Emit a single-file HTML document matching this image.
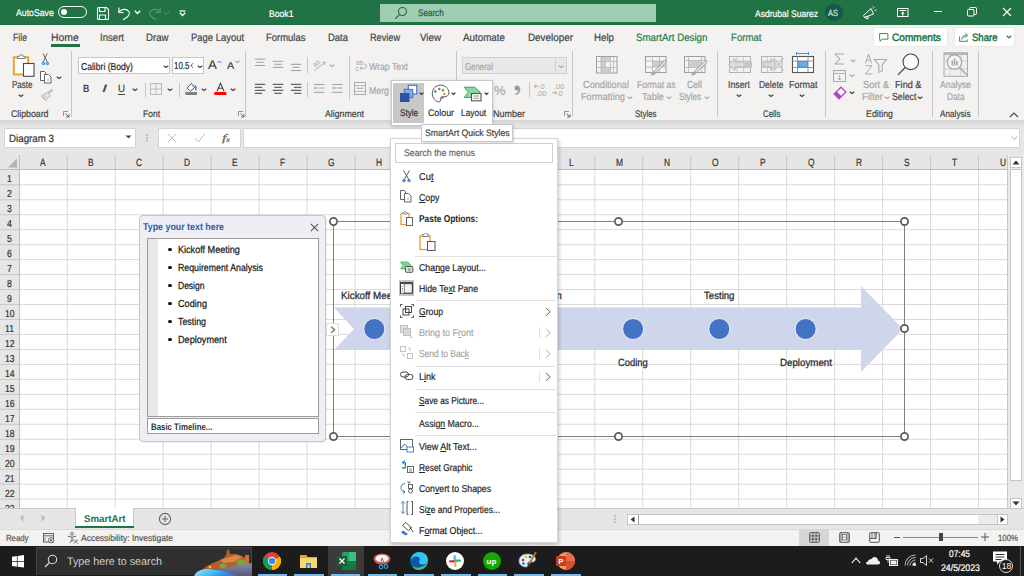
<!DOCTYPE html>
<html><head><meta charset="utf-8"><style>
*{margin:0;padding:0;box-sizing:border-box}
html,body{width:1024px;height:576px;overflow:hidden;background:#fff;font-family:"Liberation Sans",sans-serif;position:relative}
.a{position:absolute}
.t{position:absolute;white-space:nowrap;line-height:1;-webkit-text-stroke:0.2px currentColor;text-rendering:geometricPrecision}
u{text-decoration:underline;text-decoration-thickness:1px;text-underline-offset:1px}
</style></head><body>
<div class="a" style="left:0px;top:0px;width:1024px;height:25px;background:#217346;"></div>
<div class="t" style="left:15.50px;top:9.00px;font-size:9.6px;color:#fff;transform:scaleX(0.9080);transform-origin:0 0;">AutoSave</div>
<div class="a" style="left:58px;top:6px;width:29px;height:12px;background:none;border:1px solid #fff;border-radius:6px;"></div>
<div class="a" style="left:61px;top:9px;width:6px;height:6px;background:#fff;border-radius:50%;"></div>
<svg class="a" style="left:96px;top:6px;" width="14" height="15" viewBox="0 0 14 15"><path d="M1.5 2.5a1 1 0 0 1 1-1h8l2 2v9a1 1 0 0 1-1 1h-9a1 1 0 0 1-1-1z" fill="none" stroke="#fff" stroke-width="1.1"/><path d="M3.5 1.5v4h5.5v-4M3.5 13.5v-4.5h6v4.5" fill="none" stroke="#fff" stroke-width="1.1"/></svg>
<svg class="a" style="left:117px;top:6px;" width="15" height="15" viewBox="0 0 15 15"><path d="M2 1.5L1.8 6.3L6.5 6.6" fill="none" stroke="#fff" stroke-width="1.1"/><path d="M2 6.2C4 3 9.5 2.2 11.8 5.5C13.5 8 12 10.5 6 13.8" fill="none" stroke="#fff" stroke-width="1.1"/></svg>
<svg class="a" style="left:133.5px;top:10px;" width="7" height="5" viewBox="0 0 7 5"><path d="M0.8 0.8l2.7 2.7 2.7-2.7" fill="none" stroke="#fff" stroke-width="1.3"/></svg>
<svg class="a" style="left:147px;top:6px;" width="15" height="15" viewBox="0 0 15 15"><path d="M13 1.5L13.2 6.3L8.5 6.6" fill="none" stroke="#5a9a74" stroke-width="1.1"/><path d="M13 6.2C11 3 5.5 2.2 3.2 5.5C1.5 8 3 10.5 9 13.8" fill="none" stroke="#5a9a74" stroke-width="1.1"/></svg>
<svg class="a" style="left:163px;top:10.5px;" width="7" height="5" viewBox="0 0 7 5"><path d="M0.8 0.8l2.7 2.7 2.7-2.7" fill="none" stroke="#5a9a74" stroke-width="1"/></svg>
<svg class="a" style="left:179px;top:9.5px;" width="7" height="7" viewBox="0 0 7 7"><path d="M0.5 1h6" stroke="#fff" stroke-width="1.2"/><path d="M0.8 2.8l2.7 2.7 2.7-2.7" fill="none" stroke="#fff" stroke-width="1.3"/></svg>
<div class="t" style="left:269.00px;top:10.00px;font-size:9.6px;color:#fff;transform:scaleX(0.9000);transform-origin:0 0;">Book1</div>
<div class="a" style="left:380px;top:4px;width:276px;height:18px;background:#9fcdb3;"></div>
<svg class="a" style="left:394px;top:6px;" width="14" height="14" viewBox="0 0 14 14"><circle cx="8.5" cy="5.5" r="4" fill="none" stroke="#1f6b40" stroke-width="1.1"/><path d="M5.6 8.4L1.2 12.8" stroke="#1f6b40" stroke-width="1.2"/></svg>
<div class="t" style="left:417.70px;top:9.00px;font-size:9.6px;color:#1c5e3a;transform:scaleX(0.8449);transform-origin:0 0;">Search</div>
<div class="t" style="left:755.00px;top:10.00px;font-size:9.6px;color:#fff;transform:scaleX(0.8876);transform-origin:0 0;">Asdrubal Suarez</div>
<div class="a" style="left:825px;top:3.6px;width:17.5px;height:17.5px;background:#135a48;border-radius:50%;"></div>
<div class="t" style="left:828.30px;top:9.00px;font-size:9px;color:#cfe6dd;transform:scaleX(0.8329);transform-origin:0 0;">AS</div>
<svg class="a" style="left:862px;top:6px;" width="15" height="14" viewBox="0 0 15 14"><path d="M1.5 9.5L9 2.5l2.5 5.5-9 3.5z" fill="none" stroke="#fff" stroke-width="1"/><path d="M3.5 10.5l1 2.5 2-0.8-0.8-2" fill="none" stroke="#fff" stroke-width="1"/><path d="M11 2.5l1.5-1.5M12.5 4.5l2-0.5M10.5 0.5l0.3-0.5" stroke="#fff" stroke-width="0.9"/></svg>
<svg class="a" style="left:897px;top:7.5px;" width="12" height="10" viewBox="0 0 12 10"><rect x="0.5" y="0.5" width="10.5" height="8" fill="none" stroke="#fff" stroke-width="1"/><path d="M2.5 2.5h6.5" stroke="#fff" stroke-width="1"/><path d="M5.75 3.5l-2 2h1.3v2h1.4v-2h1.3z" fill="#fff"/></svg>
<div class="a" style="left:934px;top:11px;width:7.5px;height:1px;background:#fff;"></div>
<svg class="a" style="left:967px;top:7px;" width="10" height="10" viewBox="0 0 10 10"><rect x="0.5" y="2.5" width="6.5" height="6.5" rx="1" fill="none" stroke="#fff" stroke-width="1"/><path d="M2.5 2.5v-1a1 1 0 0 1 1-1h5a1 1 0 0 1 1 1v5a1 1 0 0 1-1 1h-1.5" fill="none" stroke="#fff" stroke-width="1"/></svg>
<svg class="a" style="left:1002px;top:7px;" width="10" height="10" viewBox="0 0 10 10"><path d="M1 1l8 8M9 1l-8 8" stroke="#fff" stroke-width="1.1"/></svg>
<div class="a" style="left:0px;top:25px;width:1024px;height:95px;background:#f3f2f1;"></div>
<div class="t" style="left:12.80px;top:33.00px;font-size:10.6px;color:#444444;transform:scaleX(0.8196);transform-origin:0 0;">File</div>
<div class="t" style="left:51.00px;top:33.00px;font-size:10.6px;color:#444444;transform:scaleX(0.9832);transform-origin:0 0;">Home</div>
<div class="t" style="left:99.50px;top:33.00px;font-size:10.6px;color:#444444;transform:scaleX(0.9053);transform-origin:0 0;">Insert</div>
<div class="t" style="left:145.50px;top:33.00px;font-size:10.6px;color:#444444;transform:scaleX(0.9096);transform-origin:0 0;">Draw</div>
<div class="t" style="left:190.50px;top:33.00px;font-size:10.6px;color:#444444;transform:scaleX(0.8937);transform-origin:0 0;">Page Layout</div>
<div class="t" style="left:266.00px;top:33.00px;font-size:10.6px;color:#444444;transform:scaleX(0.8941);transform-origin:0 0;">Formulas</div>
<div class="t" style="left:327.70px;top:33.00px;font-size:10.6px;color:#444444;transform:scaleX(0.8932);transform-origin:0 0;">Data</div>
<div class="t" style="left:369.70px;top:33.00px;font-size:10.6px;color:#444444;transform:scaleX(0.8632);transform-origin:0 0;">Review</div>
<div class="t" style="left:420.00px;top:33.00px;font-size:10.6px;color:#444444;transform:scaleX(0.9217);transform-origin:0 0;">View</div>
<div class="t" style="left:463.00px;top:33.00px;font-size:10.6px;color:#444444;transform:scaleX(0.9257);transform-origin:0 0;">Automate</div>
<div class="t" style="left:527.50px;top:33.00px;font-size:10.6px;color:#444444;transform:scaleX(0.9313);transform-origin:0 0;">Developer</div>
<div class="t" style="left:594.00px;top:33.00px;font-size:10.6px;color:#444444;transform:scaleX(0.9174);transform-origin:0 0;">Help</div>
<div class="t" style="left:636.00px;top:33.00px;font-size:10.6px;color:#2a7a4a;transform:scaleX(0.9195);transform-origin:0 0;">SmartArt Design</div>
<div class="t" style="left:731.00px;top:33.00px;font-size:10.6px;color:#2a7a4a;transform:scaleX(0.9085);transform-origin:0 0;">Format</div>
<div class="a" style="left:51px;top:44px;width:29px;height:2.5px;background:#217346;"></div>
<div class="a" style="left:874px;top:28px;width:73px;height:17.5px;background:#fff;border-radius:2px;box-shadow:0 0 0 0.5px #e4e2e0;"></div>
<svg class="a" style="left:879px;top:32.5px;" width="10" height="9" viewBox="0 0 10 9"><path d="M0.6 0.6h8.3v5.6H3.2L1 8.3V6.2H0.6z" fill="none" stroke="#2e7d4f" stroke-width="0.9"/></svg>
<div class="t" style="left:891.60px;top:33.00px;font-size:10.6px;color:#217346;transform:scaleX(0.9523);transform-origin:0 0;-webkit-text-stroke:0.45px #217346;">Comments</div>
<div class="a" style="left:955px;top:28px;width:59px;height:17.5px;background:#fff;border-radius:2px;box-shadow:0 0 0 0.5px #e4e2e0;"></div>
<svg class="a" style="left:959px;top:32px;" width="11" height="10" viewBox="0 0 11 10"><path d="M0.6 4.5v4.8h7.6V7.5" fill="none" stroke="#2e7d4f" stroke-width="0.9"/><path d="M2.8 7.5c0-3 2-4.3 4.8-4.3M6.3 1l2.4 2.2-2.4 2.2" fill="none" stroke="#2e7d4f" stroke-width="0.9"/><path d="M3.5 6l3.5-2" stroke="#2e7d4f" stroke-width="0.6"/></svg>
<div class="t" style="left:972.30px;top:33.00px;font-size:10.6px;color:#217346;transform:scaleX(0.9015);transform-origin:0 0;-webkit-text-stroke:0.45px #217346;">Share</div>
<svg class="a" style="left:1005.5px;top:35px;" width="6" height="4" viewBox="0 0 6 4"><path d="M0.7 0.7l2.3 2.2 2.3-2.2" fill="none" stroke="#2e7d4f" stroke-width="1.2"/></svg>
<div class="t" style="left:10.80px;top:110.00px;font-size:9.6px;color:#444444;transform:scaleX(0.9126);transform-origin:0 0;">Clipboard</div>
<svg class="a" style="left:63px;top:111px;" width="7" height="7" viewBox="0 0 7 7"><path d="M0.5 5V0.5H5" fill="none" stroke="#888" stroke-width="0.9"/><path d="M2.5 2.5l3.5 3.5M6 3.2v2.8H3.2" fill="none" stroke="#666" stroke-width="1"/></svg>
<div class="a" style="left:71px;top:51px;width:1px;height:66px;background:#c8c6c4;"></div>
<div class="t" style="left:143.00px;top:110.00px;font-size:9.6px;color:#444444;transform:scaleX(0.8850);transform-origin:0 0;">Font</div>
<svg class="a" style="left:238px;top:111px;" width="7" height="7" viewBox="0 0 7 7"><path d="M0.5 5V0.5H5" fill="none" stroke="#888" stroke-width="0.9"/><path d="M2.5 2.5l3.5 3.5M6 3.2v2.8H3.2" fill="none" stroke="#666" stroke-width="1"/></svg>
<div class="a" style="left:245px;top:51px;width:1px;height:66px;background:#c8c6c4;"></div>
<div class="t" style="left:325.00px;top:110.00px;font-size:9.6px;color:#444444;transform:scaleX(0.9135);transform-origin:0 0;">Alignment</div>
<div class="a" style="left:455.5px;top:51px;width:1px;height:69px;background:#c8c6c4;"></div>
<div class="t" style="left:493.00px;top:110.00px;font-size:9.6px;color:#444444;transform:scaleX(0.9372);transform-origin:0 0;">Number</div>
<svg class="a" style="left:564px;top:111px;" width="7" height="7" viewBox="0 0 7 7"><path d="M0.5 5V0.5H5" fill="none" stroke="#888" stroke-width="0.9"/><path d="M2.5 2.5l3.5 3.5M6 3.2v2.8H3.2" fill="none" stroke="#666" stroke-width="1"/></svg>
<div class="a" style="left:572px;top:51px;width:1px;height:66px;background:#c8c6c4;"></div>
<div class="t" style="left:634.50px;top:110.00px;font-size:9.6px;color:#444444;transform:scaleX(0.8224);transform-origin:0 0;">Styles</div>
<div class="a" style="left:717px;top:51px;width:1px;height:66px;background:#c8c6c4;"></div>
<div class="t" style="left:762.70px;top:110.00px;font-size:9.6px;color:#444444;transform:scaleX(0.8201);transform-origin:0 0;">Cells</div>
<div class="a" style="left:825px;top:51px;width:1px;height:66px;background:#c8c6c4;"></div>
<div class="t" style="left:865.50px;top:110.00px;font-size:9.6px;color:#444444;transform:scaleX(0.9198);transform-origin:0 0;">Editing</div>
<div class="a" style="left:932px;top:51px;width:1px;height:66px;background:#c8c6c4;"></div>
<div class="t" style="left:940.00px;top:110.00px;font-size:9.6px;color:#444444;transform:scaleX(0.8532);transform-origin:0 0;">Analysis</div>
<div class="a" style="left:978px;top:51px;width:1px;height:66px;background:#c8c6c4;"></div>
<svg class="a" style="left:1009px;top:112px;" width="10" height="6" viewBox="0 0 10 6"><path d="M1 5l4-4 4 4" fill="none" stroke="#444" stroke-width="1.1"/></svg>
<svg class="a" style="left:12px;top:53px;" width="24" height="25" viewBox="0 0 24 25"><rect x="1.8" y="4.3" width="14.4" height="17.2" fill="#fff" stroke="#ee9b2e" stroke-width="1.9"/><path d="M5.5 5.5v-2.2h2.2a1.6 1.6 0 0 1 3.2 0h2.2v2.2z" fill="#fff" stroke="#7a7a7a" stroke-width="1"/><rect x="11.5" y="10.5" width="10.5" height="12.8" fill="#fff" stroke="#4a4a4a" stroke-width="1.1"/></svg>
<div class="t" style="left:11.80px;top:81.00px;font-size:10.2px;color:#444444;transform:scaleX(0.7859);transform-origin:0 0;">Paste</div>
<svg class="a" style="left:18px;top:94px;" width="6" height="4" viewBox="0 0 6 4"><path d="M0.7 0.7l2.3 1.8 2.3 -1.8" fill="none" stroke="#444" stroke-width="1.2"/></svg>
<svg class="a" style="left:40px;top:53px;" width="10" height="13" viewBox="0 0 10 13"><path d="M3.2 0.5l4.3 9M7.2 0.5l-4.3 9" stroke="#555" stroke-width="0.9" fill="none"/><circle cx="3.4" cy="10.5" r="1.7" fill="#4a98e0"/><circle cx="7.4" cy="10.5" r="1.7" fill="#4a98e0"/><circle cx="3.4" cy="10.5" r="0.6" fill="#a8d0f4"/><circle cx="7.4" cy="10.5" r="0.6" fill="#a8d0f4"/></svg>
<svg class="a" style="left:39px;top:70px;" width="14" height="14" viewBox="0 0 14 14"><path d="M1.5 1.5h4l1 1v8h-5z" fill="#fff" stroke="#555" stroke-width="0.9"/><path d="M5.5 4.5h4l2.5 2.5v6h-6.5z" fill="#fff" stroke="#555" stroke-width="0.9"/><path d="M8 10h2" stroke="#888" stroke-width="0.8"/></svg>
<svg class="a" style="left:56px;top:76px;" width="6" height="4" viewBox="0 0 6 4"><path d="M0.7 0.7l2.3 1.8 2.3 -1.8" fill="none" stroke="#444" stroke-width="1.2"/></svg>
<svg class="a" style="left:39px;top:88px;" width="15" height="13" viewBox="0 0 15 13"><path d="M13.5 1.5L9 5.5" stroke="#b8b8b8" stroke-width="2.2"/><path d="M8.5 4.5l3 3-5 5-4.5-4.5z" fill="#e4e4e4" stroke="#b0b0b0" stroke-width="0.9"/><path d="M4 9l2 2M5.5 7.5l2 2" stroke="#b0b0b0" stroke-width="0.8"/></svg>
<div class="a" style="left:78px;top:57px;width:92px;height:17px;background:#fff;border:1px solid #c8c6c4;"></div>
<div class="t" style="left:80.50px;top:63.00px;font-size:10.2px;color:#262626;transform:scaleX(0.8416);transform-origin:0 0;">Calibri (Body)</div>
<svg class="a" style="left:162.5px;top:64.5px;" width="6" height="4" viewBox="0 0 6 4"><path d="M0.7 0.7l2.3 1.8 2.3 -1.8" fill="none" stroke="#444" stroke-width="1.2"/></svg>
<div class="a" style="left:172px;top:57px;width:32px;height:17px;background:#fff;border:1px solid #c8c6c4;"></div>
<div class="t" style="left:174.30px;top:62.00px;font-size:10.2px;color:#262626;transform:scaleX(0.7757);transform-origin:0 0;">10.5</div>
<svg class="a" style="left:190.3px;top:62px;" width="4" height="7" viewBox="0 0 4 7"><path d="M3.3 1L0.8 3.5 3.3 6M1 3.5h1.2" fill="none" stroke="#666" stroke-width="0.9"/></svg>
<svg class="a" style="left:196.5px;top:64.5px;" width="6" height="4" viewBox="0 0 6 4"><path d="M0.7 0.7l2.3 1.8 2.3 -1.8" fill="none" stroke="#444" stroke-width="1.2"/></svg>
<div class="t" style="left:208.00px;top:59.00px;font-size:12.5px;color:#444;transform:scaleX(1.0554);transform-origin:0 0;">A</div>
<svg class="a" style="left:216.5px;top:59.5px;" width="5" height="4" viewBox="0 0 5 4"><path d="M0.5 3l2-2 2 2" fill="none" stroke="#2b7cd3" stroke-width="1"/></svg>
<div class="t" style="left:227.20px;top:62.00px;font-size:10px;color:#444;transform:scaleX(1.0794);transform-origin:0 0;">A</div>
<svg class="a" style="left:234.5px;top:60px;" width="5" height="4" viewBox="0 0 5 4"><path d="M0.5 0.8l2 2 2-2" fill="none" stroke="#2b7cd3" stroke-width="1"/></svg>
<div class="t" style="left:83.00px;top:84.00px;font-size:10.5px;color:#444;font-weight:bold;-webkit-text-stroke:0;transform:scaleX(0.8308);transform-origin:0 0;">B</div>
<div class="t" style="left:101.80px;top:84.00px;font-size:10.5px;color:#444;transform:scaleX(1.7141);transform-origin:0 0;font-style:italic;">I</div>
<div class="t" style="left:118.20px;top:84.00px;font-size:10.5px;color:#444;transform:scaleX(0.9231);transform-origin:0 0;">U</div>
<div class="a" style="left:118px;top:93.5px;width:7px;height:1px;background:#444;"></div>
<svg class="a" style="left:132px;top:88px;" width="6" height="4" viewBox="0 0 6 4"><path d="M0.7 0.7l2.3 1.8 2.3 -1.8" fill="none" stroke="#444" stroke-width="1.2"/></svg>
<div class="a" style="left:145px;top:83px;width:1px;height:14px;background:#c8c6c4;"></div>
<svg class="a" style="left:150px;top:83px;" width="12" height="12" viewBox="0 0 12 12"><rect x="0.5" y="0.5" width="11" height="11" fill="none" stroke="#bbb" stroke-width="1"/><path d="M6 0.5v11M0.5 6h11" stroke="#bbb" stroke-width="1"/></svg>
<svg class="a" style="left:167px;top:88px;" width="6" height="4" viewBox="0 0 6 4"><path d="M0.7 0.7l2.3 1.8 2.3 -1.8" fill="none" stroke="#444" stroke-width="1.2"/></svg>
<div class="a" style="left:179px;top:83px;width:1px;height:14px;background:#c8c6c4;"></div>
<svg class="a" style="left:184px;top:82px;" width="14" height="14" viewBox="0 0 14 14"><path d="M7.4 1.3L3 6.2 6.5 9.2 10.4 5.7z" fill="#fafafa" stroke="#555" stroke-width="1"/><path d="M10.8 3.6c1.3 1 1.5 2.8 0.9 4.6" fill="none" stroke="#2b7cd3" stroke-width="1.4"/><rect x="1.3" y="10" width="11.7" height="3" fill="#808080"/></svg>
<svg class="a" style="left:201px;top:88px;" width="6" height="4" viewBox="0 0 6 4"><path d="M0.7 0.7l2.3 1.8 2.3 -1.8" fill="none" stroke="#444" stroke-width="1.2"/></svg>
<svg class="a" style="left:214px;top:82px;" width="13" height="14" viewBox="0 0 13 14"><path d="M3 9.2L6.5 1.3 10 9.2M4.3 6.3h4.4" fill="none" stroke="#444" stroke-width="1.1"/><rect x="0.3" y="10" width="12" height="3" fill="#f00"/></svg>
<svg class="a" style="left:230px;top:88px;" width="6" height="4" viewBox="0 0 6 4"><path d="M0.7 0.7l2.3 1.8 2.3 -1.8" fill="none" stroke="#444" stroke-width="1.2"/></svg>
<svg class="a" style="left:254px;top:58px;" width="12" height="14" viewBox="0 0 12 14"><rect x="0.8" y="0.60" width="10.5" height="1" fill="#a0a0a0"/><rect x="2.3" y="3.80" width="7.5" height="1" fill="#a0a0a0"/><rect x="0.8" y="7.00" width="10.5" height="1" fill="#a0a0a0"/></svg>
<svg class="a" style="left:272px;top:58px;" width="12" height="14" viewBox="0 0 12 14"><rect x="0.8" y="2.80" width="10.5" height="1" fill="#a0a0a0"/><rect x="2.3" y="5.80" width="7.5" height="1" fill="#a0a0a0"/><rect x="0.8" y="8.80" width="10.5" height="1" fill="#a0a0a0"/></svg>
<svg class="a" style="left:290px;top:58px;" width="12" height="14" viewBox="0 0 12 14"><rect x="0.8" y="5.80" width="10.5" height="1" fill="#a0a0a0"/><rect x="2.3" y="8.80" width="7.5" height="1" fill="#a0a0a0"/><rect x="0.8" y="12.00" width="10.5" height="1" fill="#a0a0a0"/></svg>
<div class="a" style="left:307px;top:57px;width:1px;height:16px;background:#c8c6c4;"></div>
<svg class="a" style="left:312px;top:58px;" width="16" height="14" viewBox="0 0 16 14"><text x="0" y="0" font-size="7" fill="#a8a8a8" font-family="Liberation Sans" transform="translate(2.5 9.5) rotate(-35)">ab</text><path d="M2.5 12.5l10.5-8M10.3 4.3l2.9-0.1-0.6 2.8" fill="none" stroke="#a8a8a8" stroke-width="0.9"/></svg>
<svg class="a" style="left:329px;top:64px;" width="6" height="4" viewBox="0 0 6 4"><path d="M0.7 0.7l2.3 1.8 2.3 -1.8" fill="none" stroke="#aaa" stroke-width="1.2"/></svg>
<div class="a" style="left:349px;top:56px;width:1px;height:44px;background:#c8c6c4;"></div>
<svg class="a" style="left:355px;top:59px;" width="13" height="13" viewBox="0 0 13 13"><text x="1" y="5.8" font-size="6.8" fill="#a8a8a8" font-family="Liberation Sans">ab</text><text x="0.3" y="11.5" font-size="6.8" fill="#a8a8a8" font-family="Liberation Sans">c</text><path d="M5 9.2h4.5a2 2 0 0 0 0-4H9M5 9.2l1.8-1.6M5 9.2l1.8 1.6" fill="none" stroke="#a8a8a8" stroke-width="0.9"/></svg>
<div class="t" style="left:369.00px;top:63.00px;font-size:10.2px;color:#a6a6a6;transform:scaleX(0.8563);transform-origin:0 0;">Wrap Text</div>
<svg class="a" style="left:254px;top:83px;" width="12" height="12" viewBox="0 0 12 12"><rect x="0.8" y="0.80" width="10.5" height="1" fill="#444"/><rect x="0.8" y="3.80" width="7.3" height="1" fill="#444"/><rect x="0.8" y="6.80" width="10.5" height="1" fill="#444"/><rect x="0.8" y="9.80" width="7.3" height="1" fill="#444"/></svg>
<svg class="a" style="left:272px;top:83px;" width="12" height="12" viewBox="0 0 12 12"><rect x="0.8" y="0.80" width="10.5" height="1" fill="#444"/><rect x="2.3" y="3.80" width="7.5" height="1" fill="#444"/><rect x="0.8" y="6.80" width="10.5" height="1" fill="#444"/><rect x="2.3" y="9.80" width="7.5" height="1" fill="#444"/></svg>
<svg class="a" style="left:290px;top:83px;" width="12" height="12" viewBox="0 0 12 12"><rect x="0.8" y="0.80" width="10.5" height="1" fill="#444"/><rect x="4" y="3.80" width="7.3" height="1" fill="#444"/><rect x="0.8" y="6.80" width="10.5" height="1" fill="#444"/><rect x="4" y="9.80" width="7.3" height="1" fill="#444"/></svg>
<div class="a" style="left:307px;top:82px;width:1px;height:15px;background:#c8c6c4;"></div>
<svg class="a" style="left:313px;top:83px;" width="12" height="12" viewBox="0 0 12 12"><rect x="1" y="1.00" width="10.5" height="1" fill="#a0a0a0"/><rect x="5.5" y="4.50" width="6" height="1" fill="#a0a0a0"/><rect x="1" y="8.80" width="10.5" height="1" fill="#a0a0a0"/><path d="M4.5 5h-3.3M1.2 5l1.5-1.5M1.2 5l1.5 1.5" fill="none" stroke="#a0a0a0" stroke-width="0.9"/></svg>
<svg class="a" style="left:331px;top:83px;" width="12" height="12" viewBox="0 0 12 12"><rect x="1" y="1.00" width="10.5" height="1" fill="#a0a0a0"/><rect x="5.5" y="4.50" width="6" height="1" fill="#a0a0a0"/><rect x="1" y="8.80" width="10.5" height="1" fill="#a0a0a0"/><path d="M1 5h3.3M4.3 5l-1.5-1.5M4.3 5l-1.5 1.5" fill="none" stroke="#a0a0a0" stroke-width="0.9"/></svg>
<svg class="a" style="left:354px;top:82px;" width="13" height="14" viewBox="0 0 13 14"><rect x="0.5" y="0.5" width="11" height="12" fill="none" stroke="#aaa" stroke-width="1"/><path d="M0.5 3.5h11M0.5 9.5h11M3 6.5h6M3 6.5l1.5-1.5M9 6.5l-1.5-1.5" fill="none" stroke="#aaa" stroke-width="0.8"/></svg>
<div class="t" style="left:369.00px;top:87.00px;font-size:10.2px;color:#a6a6a6;transform:scaleX(0.8606);transform-origin:0 0;">Merg</div>
<div class="a" style="left:462px;top:57px;width:105px;height:17px;background:#e9e8e7;border:1px solid #d2d0ce;"></div>
<div class="t" style="left:465.00px;top:63.00px;font-size:10.2px;color:#a6a6a6;transform:scaleX(0.7716);transform-origin:0 0;">General</div>
<div class="a" style="left:555px;top:58px;width:1px;height:15px;background:#d2d0ce;"></div>
<svg class="a" style="left:557.5px;top:64.5px;" width="6" height="4" viewBox="0 0 6 4"><path d="M0.7 0.7l2.3 1.8 2.3 -1.8" fill="none" stroke="#aaa" stroke-width="1.2"/></svg>
<div class="t" style="left:493.50px;top:84.00px;font-size:13px;color:#a6a6a6;transform:scaleX(0.9949);transform-origin:0 0;">%</div>
<svg class="a" style="left:514px;top:85px;" width="7" height="10" viewBox="0 0 7 10"><circle cx="3.2" cy="3" r="2.6" fill="#9a9a9a"/><path d="M5.6 3.5C5.6 6.5 4 8.5 1.5 9.5" fill="none" stroke="#9a9a9a" stroke-width="1.6"/></svg>
<div class="a" style="left:529px;top:82px;width:1px;height:15px;background:#c8c6c4;"></div>
<svg class="a" style="left:533px;top:82px;" width="15" height="15" viewBox="0 0 15 15"><path d="M6 4.2H1.2M1.2 4.2l2-2M1.2 4.2l2 2" fill="none" stroke="#a8a8a8" stroke-width="0.9"/><text x="7.5" y="7" font-size="7.5" fill="#a8a8a8" font-family="Liberation Sans">0</text><text x="3" y="13.5" font-size="7.5" fill="#a8a8a8" font-family="Liberation Sans">.00</text></svg>
<svg class="a" style="left:551px;top:82px;" width="15" height="15" viewBox="0 0 15 15"><text x="3" y="7" font-size="7.5" fill="#a8a8a8" font-family="Liberation Sans">.00</text><path d="M1 10.8h4.8M5.8 10.8l-2-2M5.8 10.8l-2 2" fill="none" stroke="#a8a8a8" stroke-width="0.9"/><text x="7.5" y="13.5" font-size="7.5" fill="#a8a8a8" font-family="Liberation Sans">0</text></svg>
<svg class="a" style="left:595px;top:55px;" width="23" height="19" viewBox="0 0 23 19"><rect x="1.5" y="1.5" width="20.5" height="16.5" fill="#f4f4f4" stroke="#9e9e9e" stroke-width="1"/><rect x="6" y="2" width="9.5" height="4.5" fill="#cdcdcd"/><rect x="6" y="6.5" width="5" height="6" fill="#cdcdcd"/><rect x="6" y="12.5" width="10" height="5" fill="#cdcdcd"/><path d="M6 1.5v16.5M15.5 1.5v16.5M18.5 1.5v16.5M1.5 6.5h20.5M1.5 12.5h20.5" stroke="#b5b5b5" stroke-width="0.8"/></svg>
<svg class="a" style="left:644px;top:55px;" width="24" height="22" viewBox="0 0 24 22"><rect x="1.5" y="1.5" width="20.5" height="16" fill="#f4f4f4" stroke="#9e9e9e" stroke-width="1"/><rect x="8.5" y="6" width="13" height="6" fill="#cdcdcd"/><path d="M8.5 1.5v16M15.5 1.5v16M1.5 6h20.5M1.5 12h20.5" stroke="#b5b5b5" stroke-width="0.8"/><path d="M21.5 6.5L11 17" stroke="#999" stroke-width="2.8" stroke-linecap="round"/><path d="M21.5 6.5L11 17" stroke="#f2f2f2" stroke-width="1.2" stroke-linecap="round"/><path d="M10.5 16c-2 0.3-3 2-4 4.5c2.5 0 4.5-0.8 5.8-2.8z" fill="#a8a8a8"/></svg>
<svg class="a" style="left:683px;top:55px;" width="25" height="22" viewBox="0 0 25 22"><rect x="1.5" y="1.5" width="20.5" height="16" fill="#f4f4f4" stroke="#9e9e9e" stroke-width="1"/><rect x="5.5" y="5.5" width="13" height="7" fill="#cdcdcd"/><path d="M5.5 1.5v16M18.5 1.5v16M1.5 5.5h20.5M1.5 12.5h20.5" stroke="#b5b5b5" stroke-width="0.8"/><path d="M23 6.5L12.5 17" stroke="#999" stroke-width="2.8" stroke-linecap="round"/><path d="M23 6.5L12.5 17" stroke="#f2f2f2" stroke-width="1.2" stroke-linecap="round"/><path d="M12 16c-2 0.3-3 2-4 4.5c2.5 0 4.5-0.8 5.8-2.8z" fill="#a8a8a8"/></svg>
<div class="t" style="left:583.40px;top:81.00px;font-size:10.2px;color:#a6a6a6;transform:scaleX(0.9013);transform-origin:0 0;">Conditional</div>
<div class="t" style="left:580.60px;top:93.00px;font-size:10.2px;color:#a6a6a6;transform:scaleX(0.9026);transform-origin:0 0;">Formatting</div>
<svg class="a" style="left:627px;top:96px;" width="6" height="4" viewBox="0 0 6 4"><path d="M0.7 0.7l2.3 1.8 2.3 -1.8" fill="none" stroke="#aaa" stroke-width="1.2"/></svg>
<div class="t" style="left:636.60px;top:81.00px;font-size:10.2px;color:#a6a6a6;transform:scaleX(0.8386);transform-origin:0 0;">Format as</div>
<div class="t" style="left:642.00px;top:93.00px;font-size:10.2px;color:#a6a6a6;transform:scaleX(0.9022);transform-origin:0 0;">Table</div>
<svg class="a" style="left:666px;top:96px;" width="6" height="4" viewBox="0 0 6 4"><path d="M0.7 0.7l2.3 1.8 2.3 -1.8" fill="none" stroke="#aaa" stroke-width="1.2"/></svg>
<div class="t" style="left:687.00px;top:81.00px;font-size:10.2px;color:#a6a6a6;transform:scaleX(0.8536);transform-origin:0 0;">Cell</div>
<div class="t" style="left:679.00px;top:93.00px;font-size:10.2px;color:#a6a6a6;transform:scaleX(0.7920);transform-origin:0 0;">Styles</div>
<svg class="a" style="left:704px;top:96px;" width="6" height="4" viewBox="0 0 6 4"><path d="M0.7 0.7l2.3 1.8 2.3 -1.8" fill="none" stroke="#aaa" stroke-width="1.2"/></svg>
<svg class="a" style="left:727px;top:55px;" width="26" height="19" viewBox="0 0 26 19"><rect x="2.5" y="1.5" width="21" height="16" fill="#f2f2f2" stroke="#b0b0b0" stroke-width="1"/><path d="M10 1.5v16M16.5 1.5v16M2.5 6h21M2.5 12.5h21" stroke="#c4c4c4" stroke-width="0.8"/><path d="M24.5 7v5H8v3.5L1.5 9.5 8 3.5V7z" fill="#dcdcdc" stroke="#b0b0b0" stroke-width="0.9"/><rect x="16.5" y="7" width="8" height="5" fill="#c8c8c8"/></svg>
<div class="t" style="left:728.00px;top:81.00px;font-size:10.2px;color:#444;transform:scaleX(0.8624);transform-origin:0 0;">Insert</div>
<svg class="a" style="left:736px;top:94px;" width="6" height="4" viewBox="0 0 6 4"><path d="M0.7 0.7l2.3 1.8 2.3 -1.8" fill="none" stroke="#444" stroke-width="1.2"/></svg>
<svg class="a" style="left:760px;top:55px;" width="25" height="19" viewBox="0 0 25 19"><rect x="1.5" y="1.5" width="20.5" height="16" fill="#f2f2f2" stroke="#b0b0b0" stroke-width="1"/><path d="M7.5 1.5v16M14 1.5v16M1.5 6h20.5M1.5 12.5h20.5" stroke="#c4c4c4" stroke-width="0.8"/><path d="M3 7h8V3.5l5.5 6-5.5 6V12H3z" fill="#d8d8d8" stroke="#b0b0b0" stroke-width="0.9"/><path d="M14 3.5l9.5 12M23.5 3.5l-9.5 12" stroke="#b0b0b0" stroke-width="1"/></svg>
<div class="t" style="left:758.70px;top:81.00px;font-size:10.2px;color:#444;transform:scaleX(0.8309);transform-origin:0 0;">Delete</div>
<svg class="a" style="left:768px;top:94px;" width="6" height="4" viewBox="0 0 6 4"><path d="M0.7 0.7l2.3 1.8 2.3 -1.8" fill="none" stroke="#444" stroke-width="1.2"/></svg>
<svg class="a" style="left:791px;top:52px;" width="24" height="22" viewBox="0 0 24 22"><path d="M5.5 1.5h12M5.5 0v3M17.5 0v3" stroke="#3c8fd8" stroke-width="1"/><rect x="1.5" y="4.5" width="21" height="16" fill="#fff" stroke="#555" stroke-width="1.1"/><path d="M1.5 9h21M1.5 15.5h21M6.5 4.5v16M17 4.5v16" stroke="#8a8a8a" stroke-width="0.9"/><rect x="7" y="9.5" width="9.5" height="5.5" fill="#6aaae6" stroke="#3c8fd8" stroke-width="0.8"/></svg>
<div class="t" style="left:788.50px;top:81.00px;font-size:10.2px;color:#444;transform:scaleX(0.8822);transform-origin:0 0;">Format</div>
<svg class="a" style="left:799px;top:94px;" width="6" height="4" viewBox="0 0 6 4"><path d="M0.7 0.7l2.3 1.8 2.3 -1.8" fill="none" stroke="#444" stroke-width="1.2"/></svg>
<svg class="a" style="left:834px;top:52.5px;" width="11" height="12" viewBox="0 0 11 12"><path d="M10 1H1.2L5.8 6 1.2 11H10" fill="none" stroke="#a8a8a8" stroke-width="1.1"/></svg>
<svg class="a" style="left:850px;top:59px;" width="6" height="4" viewBox="0 0 6 4"><path d="M0.7 0.7l2.3 1.8 2.3 -1.8" fill="none" stroke="#aaa" stroke-width="1.2"/></svg>
<svg class="a" style="left:833px;top:69.5px;" width="13" height="12" viewBox="0 0 13 12"><rect x="0.5" y="0.5" width="12" height="11" fill="none" stroke="#aaa" stroke-width="1"/><path d="M0.5 3.5h12M6.5 5v5M4.5 8l2 2 2-2" fill="none" stroke="#aaa" stroke-width="0.9"/></svg>
<svg class="a" style="left:849px;top:74px;" width="6" height="4" viewBox="0 0 6 4"><path d="M0.7 0.7l2.3 1.8 2.3 -1.8" fill="none" stroke="#aaa" stroke-width="1.2"/></svg>
<svg class="a" style="left:833px;top:86px;" width="14" height="14" viewBox="0 0 14 14"><path d="M8 1.2l4.8 4.8-6.8 6.8-4.8-4.8z" fill="#fff" stroke="#b146c2" stroke-width="1.3"/><path d="M1.2 8l2.6-2.6 4.8 4.8-2.6 2.6z" fill="#b146c2"/></svg>
<svg class="a" style="left:849px;top:91px;" width="6" height="4" viewBox="0 0 6 4"><path d="M0.7 0.7l2.3 1.8 2.3 -1.8" fill="none" stroke="#444" stroke-width="1.2"/></svg>
<svg class="a" style="left:864px;top:53px;" width="24" height="23" viewBox="0 0 24 23"><path d="M1.3 10.5L4.5 1.3 7.7 10.5M2.5 7.3h4.2" fill="none" stroke="#aaa" stroke-width="1"/><path d="M1.5 12.8h6.5L1.5 21h6.8" fill="none" stroke="#aaa" stroke-width="1"/><path d="M10.5 6.5h12l-4.3 5.5v6l-3.4 1.5v-7.5z" fill="none" stroke="#aaa" stroke-width="1.1"/></svg>
<div class="t" style="left:862.50px;top:81.00px;font-size:10.2px;color:#a6a6a6;transform:scaleX(0.9173);transform-origin:0 0;">Sort &amp;</div>
<div class="t" style="left:861.50px;top:93.00px;font-size:10.2px;color:#a6a6a6;transform:scaleX(0.9265);transform-origin:0 0;">Filter</div>
<svg class="a" style="left:884px;top:96px;" width="6" height="4" viewBox="0 0 6 4"><path d="M0.7 0.7l2.3 1.8 2.3 -1.8" fill="none" stroke="#aaa" stroke-width="1.2"/></svg>
<svg class="a" style="left:897px;top:52px;" width="24" height="24" viewBox="0 0 24 24"><circle cx="13.8" cy="9.8" r="7.8" fill="#fafafa" stroke="#444" stroke-width="1.1"/><path d="M8.2 15.5L1 22.8" stroke="#444" stroke-width="1.2"/></svg>
<div class="t" style="left:895.00px;top:81.00px;font-size:10.2px;color:#444;transform:scaleX(0.8989);transform-origin:0 0;">Find &amp;</div>
<div class="t" style="left:892.00px;top:93.00px;font-size:10.2px;color:#444;transform:scaleX(0.8642);transform-origin:0 0;">Select</div>
<svg class="a" style="left:917px;top:96px;" width="6" height="4" viewBox="0 0 6 4"><path d="M0.7 0.7l2.3 1.8 2.3 -1.8" fill="none" stroke="#444" stroke-width="1.2"/></svg>
<svg class="a" style="left:943px;top:52px;" width="26" height="26" viewBox="0 0 26 26"><rect x="1" y="0.8" width="23.5" height="23.5" fill="#f0f0f0" stroke="#aaa" stroke-width="1"/><rect x="1" y="0.8" width="23.5" height="2.2" fill="#b8b8b8"/><path d="M1 9h23.5M1 17h23.5M7 3v21.3M18 3v21.3" stroke="#c8c8c8" stroke-width="0.8"/><circle cx="11.5" cy="10" r="7.2" fill="#f4f4f4" stroke="#a8a8a8" stroke-width="1.3"/><rect x="8.5" y="8.5" width="1.6" height="5" fill="#aaa"/><rect x="10.8" y="6.5" width="1.6" height="7" fill="#aaa"/><rect x="13.1" y="9" width="1.6" height="4.5" fill="#aaa"/><path d="M16.5 15.5l8 8" stroke="#a8a8a8" stroke-width="1.4"/></svg>
<div class="t" style="left:940.00px;top:81.00px;font-size:10.2px;color:#a6a6a6;transform:scaleX(0.8543);transform-origin:0 0;">Analyse</div>
<div class="t" style="left:947.00px;top:93.00px;font-size:10.2px;color:#a6a6a6;transform:scaleX(0.8122);transform-origin:0 0;">Data</div>
<div class="a" style="left:0px;top:120px;width:1024px;height:35px;background:#e6e6e6;"></div>
<div class="a" style="left:0px;top:120px;width:1024px;height:6px;background:none;background:linear-gradient(#d4d4d4,#e6e6e6);"></div>
<div class="a" style="left:4px;top:128px;width:131.5px;height:19.5px;background:#fff;border:1px solid #d4d4d4;"></div>
<div class="t" style="left:9.30px;top:134.00px;font-size:10.5px;color:#333;transform:scaleX(0.9291);transform-origin:0 0;">Diagram 3</div>
<svg class="a" style="left:125px;top:135px;" width="7" height="4" viewBox="0 0 7 4"><path d="M0.5 0.5h6l-3 3z" fill="#444"/></svg>
<svg class="a" style="left:146px;top:134px;" width="3" height="8" viewBox="0 0 3 8"><rect x="0.25" y="0.2" width="1.5" height="1.5" fill="#a0a0a0"/><rect x="0.25" y="3.1" width="1.5" height="1.5" fill="#a0a0a0"/><rect x="0.25" y="6" width="1.5" height="1.5" fill="#a0a0a0"/></svg>
<div class="a" style="left:158px;top:128px;width:82.5px;height:19.5px;background:#fff;border:1px solid #d4d4d4;"></div>
<svg class="a" style="left:167px;top:133px;" width="10" height="10" viewBox="0 0 10 10"><path d="M1 1l8 8M9 1l-8 8" stroke="#bbb" stroke-width="1"/></svg>
<svg class="a" style="left:194px;top:133px;" width="11" height="10" viewBox="0 0 11 10"><path d="M1 5l3.5 4 6-8" fill="none" stroke="#bbb" stroke-width="1"/></svg>
<div class="t" style="left:222.00px;top:134.00px;font-size:10px;color:#666;transform:scaleX(1.6198);transform-origin:0 0;font-style:italic;font-family:'Liberation Serif';">f</div>
<div class="t" style="left:225.50px;top:136.00px;font-size:7.5px;color:#666;transform:scaleX(1.2000);transform-origin:0 0;font-style:italic;font-family:'Liberation Serif';">x</div>
<div class="a" style="left:243px;top:128px;width:777px;height:19.5px;background:#fff;border:1px solid #d4d4d4;"></div>
<svg class="a" style="left:1011px;top:136px;" width="7" height="4" viewBox="0 0 7 4"><path d="M0.5 0.5l3 3 3-3" fill="none" stroke="#aaa" stroke-width="1"/></svg>
<div class="a" style="left:0px;top:155px;width:1007px;height:15px;background:#e6e6e6;"></div>
<div class="a" style="left:0px;top:169px;width:1007px;height:1px;background:#bcbcbc;"></div>
<div class="a" style="left:19px;top:155px;width:1px;height:353px;background:#bcbcbc;"></div>
<svg class="a" style="left:7px;top:158px;" width="11" height="10" viewBox="0 0 11 10"><path d="M10 0.5V9.5H1z" fill="#b3b3b3"/></svg>
<svg class="a" style="left:19px;top:155px;" width="988" height="15" viewBox="0 0 988 15"><path d="M48.26 0V14" stroke="#c8c8c8" stroke-width="1"/><path d="M96.22 0V14" stroke="#c8c8c8" stroke-width="1"/><path d="M144.18 0V14" stroke="#c8c8c8" stroke-width="1"/><path d="M192.14 0V14" stroke="#c8c8c8" stroke-width="1"/><path d="M240.10 0V14" stroke="#c8c8c8" stroke-width="1"/><path d="M288.06 0V14" stroke="#c8c8c8" stroke-width="1"/><path d="M336.02 0V14" stroke="#c8c8c8" stroke-width="1"/><path d="M383.98 0V14" stroke="#c8c8c8" stroke-width="1"/><path d="M431.94 0V14" stroke="#c8c8c8" stroke-width="1"/><path d="M479.90 0V14" stroke="#c8c8c8" stroke-width="1"/><path d="M527.86 0V14" stroke="#c8c8c8" stroke-width="1"/><path d="M575.82 0V14" stroke="#c8c8c8" stroke-width="1"/><path d="M623.78 0V14" stroke="#c8c8c8" stroke-width="1"/><path d="M671.74 0V14" stroke="#c8c8c8" stroke-width="1"/><path d="M719.70 0V14" stroke="#c8c8c8" stroke-width="1"/><path d="M767.66 0V14" stroke="#c8c8c8" stroke-width="1"/><path d="M815.62 0V14" stroke="#c8c8c8" stroke-width="1"/><path d="M863.58 0V14" stroke="#c8c8c8" stroke-width="1"/><path d="M911.54 0V14" stroke="#c8c8c8" stroke-width="1"/><path d="M959.50 0V14" stroke="#c8c8c8" stroke-width="1"/></svg>
<div class="t" style="left:40.20px;top:158.00px;font-size:10.5px;color:#333;transform:scaleX(0.8000);transform-origin:0 0;">A</div>
<div class="t" style="left:88.20px;top:158.00px;font-size:10.5px;color:#333;transform:scaleX(0.8000);transform-origin:0 0;">B</div>
<div class="t" style="left:135.97px;top:158.00px;font-size:10.5px;color:#333;transform:scaleX(0.8000);transform-origin:0 0;">C</div>
<div class="t" style="left:183.97px;top:158.00px;font-size:10.5px;color:#333;transform:scaleX(0.8000);transform-origin:0 0;">D</div>
<div class="t" style="left:232.20px;top:158.00px;font-size:10.5px;color:#333;transform:scaleX(0.8000);transform-origin:0 0;">E</div>
<div class="t" style="left:280.43px;top:158.00px;font-size:10.5px;color:#333;transform:scaleX(0.8000);transform-origin:0 0;">F</div>
<div class="t" style="left:327.73px;top:158.00px;font-size:10.5px;color:#333;transform:scaleX(0.8000);transform-origin:0 0;">G</div>
<div class="t" style="left:375.97px;top:158.00px;font-size:10.5px;color:#333;transform:scaleX(0.8000);transform-origin:0 0;">H</div>
<div class="t" style="left:425.83px;top:158.00px;font-size:10.5px;color:#333;transform:scaleX(0.8000);transform-origin:0 0;">I</div>
<div class="t" style="left:472.90px;top:158.00px;font-size:10.5px;color:#333;transform:scaleX(0.8000);transform-origin:0 0;">J</div>
<div class="t" style="left:520.20px;top:158.00px;font-size:10.5px;color:#333;transform:scaleX(0.8000);transform-origin:0 0;">K</div>
<div class="t" style="left:568.66px;top:158.00px;font-size:10.5px;color:#333;transform:scaleX(0.8000);transform-origin:0 0;">L</div>
<div class="t" style="left:615.50px;top:158.00px;font-size:10.5px;color:#333;transform:scaleX(0.8000);transform-origin:0 0;">M</div>
<div class="t" style="left:663.97px;top:158.00px;font-size:10.5px;color:#333;transform:scaleX(0.8000);transform-origin:0 0;">N</div>
<div class="t" style="left:711.73px;top:158.00px;font-size:10.5px;color:#333;transform:scaleX(0.8000);transform-origin:0 0;">O</div>
<div class="t" style="left:760.20px;top:158.00px;font-size:10.5px;color:#333;transform:scaleX(0.8000);transform-origin:0 0;">P</div>
<div class="t" style="left:807.73px;top:158.00px;font-size:10.5px;color:#333;transform:scaleX(0.8000);transform-origin:0 0;">Q</div>
<div class="t" style="left:855.97px;top:158.00px;font-size:10.5px;color:#333;transform:scaleX(0.8000);transform-origin:0 0;">R</div>
<div class="t" style="left:904.20px;top:158.00px;font-size:10.5px;color:#333;transform:scaleX(0.8000);transform-origin:0 0;">S</div>
<div class="t" style="left:952.43px;top:158.00px;font-size:10.5px;color:#333;transform:scaleX(0.8000);transform-origin:0 0;">T</div>
<div class="t" style="left:999.97px;top:158.00px;font-size:10.5px;color:#333;transform:scaleX(0.8000);transform-origin:0 0;">U</div>
<div class="a" style="left:0px;top:170px;width:19px;height:338px;background:#e6e6e6;"></div>
<svg class="a" style="left:0px;top:170px;" width="19" height="338" viewBox="0 0 19 338"><path d="M0 14.77H19" stroke="#c8c8c8" stroke-width="1"/><path d="M0 29.74H19" stroke="#c8c8c8" stroke-width="1"/><path d="M0 44.71H19" stroke="#c8c8c8" stroke-width="1"/><path d="M0 59.68H19" stroke="#c8c8c8" stroke-width="1"/><path d="M0 74.65H19" stroke="#c8c8c8" stroke-width="1"/><path d="M0 89.62H19" stroke="#c8c8c8" stroke-width="1"/><path d="M0 104.59H19" stroke="#c8c8c8" stroke-width="1"/><path d="M0 119.56H19" stroke="#c8c8c8" stroke-width="1"/><path d="M0 134.53H19" stroke="#c8c8c8" stroke-width="1"/><path d="M0 149.50H19" stroke="#c8c8c8" stroke-width="1"/><path d="M0 164.47H19" stroke="#c8c8c8" stroke-width="1"/><path d="M0 179.44H19" stroke="#c8c8c8" stroke-width="1"/><path d="M0 194.41H19" stroke="#c8c8c8" stroke-width="1"/><path d="M0 209.38H19" stroke="#c8c8c8" stroke-width="1"/><path d="M0 224.35H19" stroke="#c8c8c8" stroke-width="1"/><path d="M0 239.32H19" stroke="#c8c8c8" stroke-width="1"/><path d="M0 254.29H19" stroke="#c8c8c8" stroke-width="1"/><path d="M0 269.26H19" stroke="#c8c8c8" stroke-width="1"/><path d="M0 284.23H19" stroke="#c8c8c8" stroke-width="1"/><path d="M0 299.20H19" stroke="#c8c8c8" stroke-width="1"/><path d="M0 314.17H19" stroke="#c8c8c8" stroke-width="1"/><path d="M0 329.14H19" stroke="#c8c8c8" stroke-width="1"/></svg>
<div class="t" style="left:7.19px;top:175.00px;font-size:10.2px;color:#333;transform:scaleX(0.8500);transform-origin:0 0;">1</div>
<div class="t" style="left:7.19px;top:190.00px;font-size:10.2px;color:#333;transform:scaleX(0.8500);transform-origin:0 0;">2</div>
<div class="t" style="left:7.19px;top:205.00px;font-size:10.2px;color:#333;transform:scaleX(0.8500);transform-origin:0 0;">3</div>
<div class="t" style="left:7.19px;top:220.00px;font-size:10.2px;color:#333;transform:scaleX(0.8500);transform-origin:0 0;">4</div>
<div class="t" style="left:7.19px;top:235.00px;font-size:10.2px;color:#333;transform:scaleX(0.8500);transform-origin:0 0;">5</div>
<div class="t" style="left:7.19px;top:250.00px;font-size:10.2px;color:#333;transform:scaleX(0.8500);transform-origin:0 0;">6</div>
<div class="t" style="left:7.19px;top:265.00px;font-size:10.2px;color:#333;transform:scaleX(0.8500);transform-origin:0 0;">7</div>
<div class="t" style="left:7.19px;top:280.00px;font-size:10.2px;color:#333;transform:scaleX(0.8500);transform-origin:0 0;">8</div>
<div class="t" style="left:7.19px;top:295.00px;font-size:10.2px;color:#333;transform:scaleX(0.8500);transform-origin:0 0;">9</div>
<div class="t" style="left:4.78px;top:310.00px;font-size:10.2px;color:#333;transform:scaleX(0.8500);transform-origin:0 0;">10</div>
<div class="t" style="left:5.10px;top:325.00px;font-size:10.2px;color:#333;transform:scaleX(0.8500);transform-origin:0 0;">11</div>
<div class="t" style="left:4.78px;top:340.00px;font-size:10.2px;color:#333;transform:scaleX(0.8500);transform-origin:0 0;">12</div>
<div class="t" style="left:4.78px;top:355.00px;font-size:10.2px;color:#333;transform:scaleX(0.8500);transform-origin:0 0;">13</div>
<div class="t" style="left:4.78px;top:370.00px;font-size:10.2px;color:#333;transform:scaleX(0.8500);transform-origin:0 0;">14</div>
<div class="t" style="left:4.78px;top:385.00px;font-size:10.2px;color:#333;transform:scaleX(0.8500);transform-origin:0 0;">15</div>
<div class="t" style="left:4.78px;top:400.00px;font-size:10.2px;color:#333;transform:scaleX(0.8500);transform-origin:0 0;">16</div>
<div class="t" style="left:4.78px;top:415.00px;font-size:10.2px;color:#333;transform:scaleX(0.8500);transform-origin:0 0;">17</div>
<div class="t" style="left:4.78px;top:430.00px;font-size:10.2px;color:#333;transform:scaleX(0.8500);transform-origin:0 0;">18</div>
<div class="t" style="left:4.78px;top:445.00px;font-size:10.2px;color:#333;transform:scaleX(0.8500);transform-origin:0 0;">19</div>
<div class="t" style="left:4.78px;top:460.00px;font-size:10.2px;color:#333;transform:scaleX(0.8500);transform-origin:0 0;">20</div>
<div class="t" style="left:4.78px;top:475.00px;font-size:10.2px;color:#333;transform:scaleX(0.8500);transform-origin:0 0;">21</div>
<div class="t" style="left:4.78px;top:490.00px;font-size:10.2px;color:#333;transform:scaleX(0.8500);transform-origin:0 0;">22</div>
<div class="t" style="left:4.78px;top:505.00px;font-size:10.2px;color:#333;transform:scaleX(0.8500);transform-origin:0 0;">23</div>
<div class="a" style="left:20px;top:170px;width:987px;height:338px;background:#fff;"></div>
<svg class="a" style="left:20px;top:170px;" width="987" height="338" viewBox="0 0 987 338"><path d="M47.26 0V338" stroke="#dadada" stroke-width="1"/><path d="M95.22 0V338" stroke="#dadada" stroke-width="1"/><path d="M143.18 0V338" stroke="#dadada" stroke-width="1"/><path d="M191.14 0V338" stroke="#dadada" stroke-width="1"/><path d="M239.10 0V338" stroke="#dadada" stroke-width="1"/><path d="M287.06 0V338" stroke="#dadada" stroke-width="1"/><path d="M335.02 0V338" stroke="#dadada" stroke-width="1"/><path d="M382.98 0V338" stroke="#dadada" stroke-width="1"/><path d="M430.94 0V338" stroke="#dadada" stroke-width="1"/><path d="M478.90 0V338" stroke="#dadada" stroke-width="1"/><path d="M526.86 0V338" stroke="#dadada" stroke-width="1"/><path d="M574.82 0V338" stroke="#dadada" stroke-width="1"/><path d="M622.78 0V338" stroke="#dadada" stroke-width="1"/><path d="M670.74 0V338" stroke="#dadada" stroke-width="1"/><path d="M718.70 0V338" stroke="#dadada" stroke-width="1"/><path d="M766.66 0V338" stroke="#dadada" stroke-width="1"/><path d="M814.62 0V338" stroke="#dadada" stroke-width="1"/><path d="M862.58 0V338" stroke="#dadada" stroke-width="1"/><path d="M910.54 0V338" stroke="#dadada" stroke-width="1"/><path d="M958.50 0V338" stroke="#dadada" stroke-width="1"/><path d="M0 14.77H987" stroke="#dadada" stroke-width="1"/><path d="M0 29.74H987" stroke="#dadada" stroke-width="1"/><path d="M0 44.71H987" stroke="#dadada" stroke-width="1"/><path d="M0 59.68H987" stroke="#dadada" stroke-width="1"/><path d="M0 74.65H987" stroke="#dadada" stroke-width="1"/><path d="M0 89.62H987" stroke="#dadada" stroke-width="1"/><path d="M0 104.59H987" stroke="#dadada" stroke-width="1"/><path d="M0 119.56H987" stroke="#dadada" stroke-width="1"/><path d="M0 134.53H987" stroke="#dadada" stroke-width="1"/><path d="M0 149.50H987" stroke="#dadada" stroke-width="1"/><path d="M0 164.47H987" stroke="#dadada" stroke-width="1"/><path d="M0 179.44H987" stroke="#dadada" stroke-width="1"/><path d="M0 194.41H987" stroke="#dadada" stroke-width="1"/><path d="M0 209.38H987" stroke="#dadada" stroke-width="1"/><path d="M0 224.35H987" stroke="#dadada" stroke-width="1"/><path d="M0 239.32H987" stroke="#dadada" stroke-width="1"/><path d="M0 254.29H987" stroke="#dadada" stroke-width="1"/><path d="M0 269.26H987" stroke="#dadada" stroke-width="1"/><path d="M0 284.23H987" stroke="#dadada" stroke-width="1"/><path d="M0 299.20H987" stroke="#dadada" stroke-width="1"/><path d="M0 314.17H987" stroke="#dadada" stroke-width="1"/><path d="M0 329.14H987" stroke="#dadada" stroke-width="1"/></svg>
<div class="a" style="left:1007px;top:155px;width:1px;height:353px;background:#c8c8c8;"></div>
<div class="a" style="left:1008px;top:155px;width:16px;height:353px;background:#e9e9e9;"></div>
<div class="a" style="left:1010px;top:157px;width:12px;height:11px;background:#fff;border:1px solid #c6c6c6;"></div>
<svg class="a" style="left:1012px;top:159.5px;" width="8" height="5" viewBox="0 0 8 5"><path d="M0.5 4.5L4 0.5 7.5 4.5z" fill="#333"/></svg>
<div class="a" style="left:1010px;top:168.5px;width:12px;height:312.5px;background:#fff;border:1px solid #c6c6c6;"></div>
<div class="a" style="left:1010px;top:498px;width:12px;height:10.5px;background:#fff;border:1px solid #c6c6c6;"></div>
<svg class="a" style="left:1012px;top:501px;" width="8" height="5" viewBox="0 0 8 5"><path d="M0.5 0.5L4 4.5 7.5 0.5z" fill="#333"/></svg>
<div class="a" style="left:0px;top:508px;width:1024px;height:21px;background:#e6e6e6;"></div>
<div class="a" style="left:0px;top:508px;width:75px;height:1px;background:#c8c8c8;"></div>
<div class="a" style="left:134px;top:508px;width:890px;height:1px;background:#c8c8c8;"></div>
<svg class="a" style="left:19px;top:514px;" width="5" height="8" viewBox="0 0 5 8"><path d="M4.5 0.5v7L0.5 4z" fill="#bbb"/></svg>
<svg class="a" style="left:41px;top:514px;" width="5" height="8" viewBox="0 0 5 8"><path d="M0.5 0.5v7L4.5 4z" fill="#bbb"/></svg>
<div class="a" style="left:75px;top:508px;width:59px;height:19px;background:#fff;border-left:1px solid #c8c8c8;border-right:1px solid #c8c8c8;"></div>
<div class="a" style="left:75px;top:525.5px;width:59px;height:2px;background:#217346;"></div>
<div class="t" style="left:84.00px;top:515.00px;font-size:9.8px;color:#217346;font-weight:bold;-webkit-text-stroke:0;transform:scaleX(0.9873);transform-origin:0 0;">SmartArt</div>
<svg class="a" style="left:158px;top:512px;" width="14" height="14" viewBox="0 0 14 14"><circle cx="7" cy="7" r="5.6" fill="none" stroke="#666" stroke-width="1.1"/><path d="M7 4v6M4 7h6" stroke="#666" stroke-width="1.1"/></svg>
<svg class="a" style="left:614px;top:515px;" width="2" height="9" viewBox="0 0 2 9"><rect x="0" y="0.2" width="1.6" height="1.5" fill="#a8a8a8"/><rect x="0" y="3.3" width="1.6" height="1.5" fill="#a8a8a8"/><rect x="0" y="6.3" width="1.6" height="1.5" fill="#a8a8a8"/></svg>
<div class="a" style="left:627px;top:514px;width:381px;height:11px;background:#fff;border:1px solid #c6c6c6;"></div>
<div class="a" style="left:627px;top:514px;width:11.5px;height:11px;background:#fff;border:1px solid #c6c6c6;border-right-color:#a0a0a0;"></div>
<svg class="a" style="left:630px;top:516px;" width="5" height="7" viewBox="0 0 5 7"><path d="M4.5 0.5v6L0.5 3.5z" fill="#333"/></svg>
<div class="a" style="left:978px;top:515px;width:19px;height:9px;background:#ececec;"></div>
<div class="a" style="left:997px;top:514px;width:11px;height:11px;background:#fff;border:1px solid #c6c6c6;"></div>
<svg class="a" style="left:1000px;top:516px;" width="5" height="7" viewBox="0 0 5 7"><path d="M0.5 0.5v6L4.5 3.5z" fill="#333"/></svg>
<div class="a" style="left:0px;top:529px;width:1024px;height:17px;background:#f3f2f1;"></div>
<div class="a" style="left:0px;top:529px;width:1024px;height:1px;background:#dadada;"></div>
<div class="t" style="left:6.30px;top:534.00px;font-size:8.8px;color:#555;transform:scaleX(0.8845);transform-origin:0 0;">Ready</div>
<svg class="a" style="left:43px;top:532.5px;" width="12" height="11" viewBox="0 0 12 11"><rect x="0.5" y="0.5" width="10" height="8.5" fill="none" stroke="#555" stroke-width="0.9"/><path d="M0.5 2.8h10" stroke="#555" stroke-width="0.9"/><path d="M2 4.5v3" stroke="#555" stroke-width="0.8"/><circle cx="8" cy="7.3" r="2.6" fill="#f3f2f1" stroke="#555" stroke-width="0.9"/><circle cx="8" cy="7.3" r="1.1" fill="#555"/></svg>
<svg class="a" style="left:67px;top:532px;" width="12" height="12" viewBox="0 0 12 12"><circle cx="5" cy="1.8" r="1.4" fill="none" stroke="#555" stroke-width="0.8"/><path d="M0.8 4.2l4.2 1 4.2-1M5 5.2v2.3L3 11M5 7.5l1.5 2" fill="none" stroke="#555" stroke-width="0.9"/><path d="M7 7.5l4 4M11 7.5l-4 4" stroke="#555" stroke-width="0.9"/></svg>
<div class="t" style="left:81.00px;top:534.00px;font-size:9.0px;color:#555;transform:scaleX(0.9432);transform-origin:0 0;">Accessibility: Investigate</div>
<div class="a" style="left:799px;top:529px;width:30px;height:17px;background:#d6d6d6;"></div>
<svg class="a" style="left:808.5px;top:531.5px;" width="11" height="11" viewBox="0 0 11 11"><rect x="0.7" y="0.7" width="9.6" height="9.6" rx="0.8" fill="none" stroke="#555" stroke-width="1"/><path d="M3.9 0.7v9.6M7.1 0.7v9.6M0.7 3.9h9.6M0.7 7.1h9.6" stroke="#555" stroke-width="0.9"/></svg>
<svg class="a" style="left:838.5px;top:531.5px;" width="11" height="11" viewBox="0 0 11 11"><rect x="0.7" y="0.7" width="9.6" height="9.6" rx="0.8" fill="none" stroke="#555" stroke-width="1"/><path d="M2 0.7v9.6M9 0.7v9.6" stroke="#555" stroke-width="0.8"/><rect x="3.5" y="2.5" width="4" height="5.5" fill="none" stroke="#666" stroke-width="0.8"/><path d="M4.5 5.2h2" stroke="#666" stroke-width="0.7"/></svg>
<svg class="a" style="left:868.5px;top:531.5px;" width="11" height="11" viewBox="0 0 11 11"><rect x="0.7" y="0.7" width="9.6" height="9.6" rx="0.8" fill="none" stroke="#555" stroke-width="1"/><path d="M3 0.7v5.8M6 0.7v5.8M0.7 6.5h6.5V0.7" fill="none" stroke="#555" stroke-width="0.9"/></svg>
<div class="a" style="left:894px;top:537px;width:5.5px;height:1px;background:#555;"></div>
<div class="a" style="left:903px;top:537px;width:75px;height:1px;background:#888;"></div>
<div class="a" style="left:939px;top:533px;width:4px;height:8px;background:#444;"></div>
<svg class="a" style="left:981px;top:533px;" width="8" height="8" viewBox="0 0 8 8"><path d="M4 0v8M0 4h8" stroke="#555" stroke-width="1"/></svg>
<div class="t" style="left:998.00px;top:534.00px;font-size:9.0px;color:#555;transform:scaleX(0.8689);transform-origin:0 0;">100%</div>
<svg class="a" style="left:320px;top:210px;" width="600" height="240" viewBox="0 0 600 240"><polygon points="14,97.5 541,97.5 541,76 583,119 541,162 541,140 14,140 34,119" fill="#cfd5ea"/><circle cx="54.30" cy="119" r="10.5" fill="#4472c4" stroke="#fff" stroke-width="0.8"/><circle cx="140.56" cy="119" r="10.5" fill="#4472c4" stroke="#fff" stroke-width="0.8"/><circle cx="226.82" cy="119" r="10.5" fill="#4472c4" stroke="#fff" stroke-width="0.8"/><circle cx="313.08" cy="119" r="10.5" fill="#4472c4" stroke="#fff" stroke-width="0.8"/><circle cx="399.34" cy="119" r="10.5" fill="#4472c4" stroke="#fff" stroke-width="0.8"/><circle cx="485.60" cy="119" r="10.5" fill="#4472c4" stroke="#fff" stroke-width="0.8"/><rect x="13.5" y="11.5" width="571" height="215" fill="none" stroke="#7f7f7f" stroke-width="1"/><circle cx="13.5" cy="11.5" r="3.6" fill="#fff" stroke="#5a5a5a" stroke-width="1.7"/><circle cx="298.5" cy="11.5" r="3.6" fill="#fff" stroke="#5a5a5a" stroke-width="1.7"/><circle cx="584.5" cy="11.5" r="3.6" fill="#fff" stroke="#5a5a5a" stroke-width="1.7"/><circle cx="13.5" cy="118.5" r="3.6" fill="#fff" stroke="#5a5a5a" stroke-width="1.7"/><circle cx="584.5" cy="118.5" r="3.6" fill="#fff" stroke="#5a5a5a" stroke-width="1.7"/><circle cx="13.5" cy="226.5" r="3.6" fill="#fff" stroke="#5a5a5a" stroke-width="1.7"/><circle cx="298.5" cy="226.5" r="3.6" fill="#fff" stroke="#5a5a5a" stroke-width="1.7"/><circle cx="584.5" cy="226.5" r="3.6" fill="#fff" stroke="#5a5a5a" stroke-width="1.7"/></svg>
<div class="t" style="left:340.80px;top:292.00px;font-size:10.4px;color:#303030;transform:scaleX(0.9448);transform-origin:0 0;-webkit-text-stroke:0.3px #303030;">Kickoff Meeting</div>
<div class="t" style="left:415.40px;top:359.00px;font-size:10.4px;color:#303030;transform:scaleX(0.8948);transform-origin:0 0;-webkit-text-stroke:0.3px #303030;">Requirement Analysis</div>
<div class="t" style="left:531.50px;top:292.00px;font-size:10.4px;color:#303030;transform:scaleX(0.9267);transform-origin:0 0;-webkit-text-stroke:0.3px #303030;">Design</div>
<div class="t" style="left:617.90px;top:359.00px;font-size:10.4px;color:#303030;transform:scaleX(0.9042);transform-origin:0 0;-webkit-text-stroke:0.3px #303030;">Coding</div>
<div class="t" style="left:703.95px;top:292.00px;font-size:10.4px;color:#303030;transform:scaleX(0.9256);transform-origin:0 0;-webkit-text-stroke:0.3px #303030;">Testing</div>
<div class="t" style="left:779.50px;top:359.00px;font-size:10.4px;color:#303030;transform:scaleX(0.9370);transform-origin:0 0;-webkit-text-stroke:0.3px #303030;">Deployment</div>
<div class="a" style="left:139px;top:215px;width:187px;height:226.5px;background:#eeeef4;border:1px solid #b9cacc;border-radius:4px;box-shadow:1px 1px 1px rgba(0,0,0,0.05);"></div>
<div class="t" style="left:143.00px;top:223.00px;font-size:10px;color:#2a62a8;font-weight:bold;-webkit-text-stroke:0;transform:scaleX(0.8851);transform-origin:0 0;">Type your text here</div>
<svg class="a" style="left:310px;top:223px;" width="9" height="9" viewBox="0 0 9 9"><path d="M0.8 0.8l7.4 7.4M8.2 0.8L0.8 8.2" stroke="#555" stroke-width="1.1"/></svg>
<div class="a" style="left:147px;top:238px;width:172px;height:179px;background:#fff;border:1px solid #9c9c9c;"></div>
<div class="a" style="left:148px;top:239px;width:10px;height:177px;background:#e9e9e9;"></div>
<div class="a" style="left:168.3px;top:247.8px;width:3.6px;height:3.6px;background:#111;border-radius:50%;"></div>
<div class="t" style="left:177.80px;top:246.00px;font-size:10.2px;color:#1a1a1a;transform:scaleX(0.8915);transform-origin:0 0;-webkit-text-stroke:0.25px #1a1a1a;">Kickoff Meeting</div>
<div class="a" style="left:168.3px;top:265.8px;width:3.6px;height:3.6px;background:#111;border-radius:50%;"></div>
<div class="t" style="left:177.80px;top:264.00px;font-size:10.2px;color:#1a1a1a;transform:scaleX(0.8616);transform-origin:0 0;-webkit-text-stroke:0.25px #1a1a1a;">Requirement Analysis</div>
<div class="a" style="left:168.3px;top:283.8px;width:3.6px;height:3.6px;background:#111;border-radius:50%;"></div>
<div class="t" style="left:177.80px;top:282.00px;font-size:10.2px;color:#1a1a1a;transform:scaleX(0.8346);transform-origin:0 0;-webkit-text-stroke:0.25px #1a1a1a;">Design</div>
<div class="a" style="left:168.3px;top:301.8px;width:3.6px;height:3.6px;background:#111;border-radius:50%;"></div>
<div class="t" style="left:177.80px;top:300.00px;font-size:10.2px;color:#1a1a1a;transform:scaleX(0.8972);transform-origin:0 0;-webkit-text-stroke:0.25px #1a1a1a;">Coding</div>
<div class="a" style="left:168.3px;top:319.8px;width:3.6px;height:3.6px;background:#111;border-radius:50%;"></div>
<div class="t" style="left:177.80px;top:318.00px;font-size:10.2px;color:#1a1a1a;transform:scaleX(0.8664);transform-origin:0 0;-webkit-text-stroke:0.25px #1a1a1a;">Testing</div>
<div class="a" style="left:168.3px;top:337.8px;width:3.6px;height:3.6px;background:#111;border-radius:50%;"></div>
<div class="t" style="left:177.80px;top:336.00px;font-size:10.2px;color:#1a1a1a;transform:scaleX(0.8957);transform-origin:0 0;-webkit-text-stroke:0.25px #1a1a1a;">Deployment</div>
<div class="a" style="left:147px;top:418px;width:172px;height:16px;background:#fff;border:1px solid #9c9c9c;"></div>
<div class="t" style="left:150.70px;top:422.00px;font-size:9.4px;color:#333;font-weight:bold;-webkit-text-stroke:0;transform:scaleX(0.8368);transform-origin:0 0;">Basic Timeline...</div>
<div class="a" style="left:326px;top:322.5px;width:12.5px;height:13px;background:#fff;border:1px solid #dcdcdc;"></div>
<svg class="a" style="left:329.5px;top:325.5px;" width="6" height="8" viewBox="0 0 6 8"><path d="M1.2 0.8L4.6 3.8 1.2 6.8" fill="none" stroke="#7a7a7a" stroke-width="1.4"/></svg>
<div class="a" style="left:390.5px;top:79.5px;width:102px;height:46.5px;background:#fff;border:1px solid #c8c8c8;box-shadow:0 1px 3px rgba(0,0,0,0.18);"></div>
<div class="a" style="left:393px;top:83px;width:31px;height:40px;background:#c8c8c8;"></div>
<svg class="a" style="left:398px;top:83px;" width="26" height="22" viewBox="0 0 26 22"><rect x="10.3" y="2.3" width="8.5" height="8.7" fill="#fff" stroke="#3f6fc0" stroke-width="1.1"/><rect x="6.3" y="6.3" width="8.5" height="8.4" fill="#7db2ea" stroke="#3a68b8" stroke-width="0.9"/><rect x="2" y="10" width="9.5" height="9" fill="#2d52a6"/></svg>
<svg class="a" style="left:419px;top:92px;" width="5" height="4" viewBox="0 0 5 4"><path d="M0.6 0.6l1.9 1.9 1.9-1.9" fill="none" stroke="#333" stroke-width="1.2"/></svg>
<div class="t" style="left:399.50px;top:109.00px;font-size:9.6px;color:#333;transform:scaleX(0.8434);transform-origin:0 0;">Style</div>
<svg class="a" style="left:431px;top:84px;" width="19" height="19" viewBox="0 0 19 19"><path d="M9.5 1.2C4.5 1.2 1.3 5 1.3 9.5c0 4.5 3 8.3 6.5 8.3 1.8 0 2.2-1.3 1.8-2.6-0.4-1.3 0.3-2.4 1.7-2.4h2.2c2.5 0 4.3-1.6 4.3-4C17.8 4.5 14.5 1.2 9.5 1.2z" fill="#fff" stroke="#555" stroke-width="1"/><circle cx="4.3" cy="7.5" r="1.2" fill="#2b7cd3"/><circle cx="8.3" cy="5" r="1.2" fill="#e8474a"/><circle cx="12" cy="6.3" r="1.2" fill="#3fa34d"/><circle cx="13.3" cy="10" r="1.2" fill="#f08c1a"/><circle cx="11.3" cy="13.8" r="1.2" fill="#b146c2"/></svg>
<svg class="a" style="left:451px;top:92px;" width="5" height="4" viewBox="0 0 5 4"><path d="M0.6 0.6l1.9 1.9 1.9-1.9" fill="none" stroke="#333" stroke-width="1.2"/></svg>
<div class="t" style="left:427.50px;top:109.00px;font-size:9.6px;color:#333;transform:scaleX(0.9193);transform-origin:0 0;">Colour</div>
<svg class="a" style="left:463px;top:86px;" width="20" height="16" viewBox="0 0 20 16"><path d="M1.2 1.2h10.5l5.5 5-5.5 5.2H1.2l4.2-5.2z" fill="#90d5a3" stroke="#3aa55a" stroke-width="1"/><rect x="8.5" y="7.5" width="9.5" height="7.3" fill="#fff" stroke="#555" stroke-width="1.1"/><path d="M10.5 10h5.5M10.5 12.3h5.5" stroke="#777" stroke-width="0.8"/></svg>
<svg class="a" style="left:483.5px;top:92px;" width="5" height="4" viewBox="0 0 5 4"><path d="M0.6 0.6l1.9 1.9 1.9-1.9" fill="none" stroke="#333" stroke-width="1.2"/></svg>
<div class="t" style="left:460.70px;top:109.00px;font-size:9.6px;color:#333;transform:scaleX(0.8743);transform-origin:0 0;">Layout</div>
<div class="a" style="left:390px;top:138.3px;width:167.5px;height:404.5px;background:#fff;border:1px solid #d4d4d4;box-shadow:1px 2px 4px rgba(0,0,0,0.22);"></div>
<div class="a" style="left:394.5px;top:142.5px;width:158px;height:20px;background:#fff;border:1px solid #d0d0d0;"></div>
<div class="t" style="left:404.00px;top:149.00px;font-size:9.6px;color:#6b6b6b;transform:scaleX(0.9113);transform-origin:0 0;">Search the menus</div>
<div class="t" style="left:419.00px;top:173.00px;font-size:10px;color:#262626;transform:scaleX(0.9318);transform-origin:0 0;">Cu<u>t</u></div>
<svg class="a" style="left:401px;top:170px;" width="11" height="13" viewBox="0 0 11 13"><path d="M2.5 0.5l5 8.5M8.5 0.5l-5 8.5" stroke="#444" stroke-width="0.9" fill="none"/><circle cx="3" cy="10.5" r="1.7" fill="#4a90d9"/><circle cx="8" cy="10.5" r="1.7" fill="#4a90d9"/></svg>
<div class="t" style="left:419.00px;top:194.00px;font-size:10px;color:#262626;transform:scaleX(0.8781);transform-origin:0 0;"><u>C</u>opy</div>
<svg class="a" style="left:399px;top:188px;" width="15" height="15" viewBox="0 0 15 15"><path d="M1.5 2.5h4l1 1v8h-5z" fill="#fff" stroke="#555" stroke-width="0.9"/><path d="M5.5 5.5h4l2.5 2.5v6h-6.5z" fill="#fff" stroke="#555" stroke-width="0.9"/><path d="M8 11h2" stroke="#888" stroke-width="0.8"/></svg>
<div class="t" style="left:419.00px;top:215.00px;font-size:10px;color:#262626;font-weight:bold;-webkit-text-stroke:0;transform:scaleX(0.8361);transform-origin:0 0;">Paste Options:</div>
<svg class="a" style="left:400px;top:211px;" width="14" height="15" viewBox="0 0 14 15"><rect x="1" y="2.5" width="8" height="11" fill="#fff" stroke="#e69a2e" stroke-width="1.2"/><path d="M3 3v-1.5h1a1 1 0 0 1 2 0h1V3z" fill="#fff" stroke="#777" stroke-width="0.8"/><rect x="6.5" y="6.5" width="6" height="8" fill="#fff" stroke="#555" stroke-width="0.9"/></svg>
<svg class="a" style="left:419px;top:233px;" width="18" height="18" viewBox="0 0 18 18"><rect x="1" y="3" width="10" height="13.5" fill="#fff" stroke="#e69a2e" stroke-width="1.3"/><path d="M3.5 3.5v-2h1.5a1.5 1.5 0 0 1 3 0h1.5v2z" fill="#fff" stroke="#777" stroke-width="0.9"/><rect x="8.5" y="8.5" width="7.5" height="9" fill="#fff" stroke="#555" stroke-width="1"/></svg>
<div class="a" style="left:415px;top:256px;width:141px;height:1px;background:#e1e1e1;"></div>
<div class="t" style="left:419.00px;top:264.00px;font-size:10px;color:#262626;transform:scaleX(0.8796);transform-origin:0 0;">Cha<u>n</u>ge Layout...</div>
<svg class="a" style="left:400px;top:261px;" width="14" height="12" viewBox="0 0 14 12"><path d="M0.5 1h7.5l3 3.5-3 3.5H0.5l2.5-3.5z" fill="#7fd095" stroke="#49b066" stroke-width="0.8"/><rect x="5.5" y="5.5" width="7.3" height="5.8" rx="0.8" fill="#ddd" stroke="#555" stroke-width="1"/><rect x="8" y="7.3" width="2.5" height="2.2" fill="#999"/></svg>
<div class="a" style="left:398.5px;top:280px;width:15.5px;height:15.5px;background:#c6c6c6;"></div>
<svg class="a" style="left:400px;top:282px;" width="13" height="12" viewBox="0 0 13 12"><rect x="0.6" y="0.6" width="11.8" height="10.6" fill="#eef4f4" stroke="#333" stroke-width="1.1"/><rect x="0.6" y="0.6" width="11.8" height="1.6" fill="#555"/><path d="M4 2v9.5" stroke="#333" stroke-width="1"/><rect x="1.2" y="2.2" width="2.6" height="9" fill="#fff"/><path d="M2.4 4v1M2.4 6v1.5M2.4 8.5v1" stroke="#555" stroke-width="0.7"/></svg>
<div class="t" style="left:419.00px;top:285.00px;font-size:10px;color:#262626;transform:scaleX(0.8723);transform-origin:0 0;">Hide Te<u>x</u>t Pane</div>
<div class="a" style="left:415px;top:300px;width:141px;height:1px;background:#e1e1e1;"></div>
<svg class="a" style="left:400px;top:304px;" width="14" height="14" viewBox="0 0 14 14"><path d="M0.5 2.5v-2h2M11.5 0.5h2v2M13.5 11.5v2h-2M2.5 13.5h-2v-2" fill="none" stroke="#333" stroke-width="0.9"/><rect x="3" y="5" width="6" height="6" fill="none" stroke="#333" stroke-width="0.9"/><rect x="5.5" y="2.5" width="6" height="6" fill="none" stroke="#333" stroke-width="0.9"/></svg>
<div class="t" style="left:419.00px;top:308.00px;font-size:10px;color:#262626;transform:scaleX(0.8635);transform-origin:0 0;"><u>G</u>roup</div>
<svg class="a" style="left:545px;top:306.8px;" width="6" height="10" viewBox="0 0 6 10"><path d="M1 0.8L5 4.8 1 8.8" fill="none" stroke="#555" stroke-width="1"/></svg>
<svg class="a" style="left:400px;top:325px;" width="14" height="13" viewBox="0 0 14 13"><rect x="0.5" y="0.5" width="7" height="7" fill="#e0e0e0" stroke="#bbb" stroke-width="0.9"/><rect x="3.5" y="3.5" width="7" height="7" fill="#d8d8d8" stroke="#bbb" stroke-width="0.9"/><path d="M10.5 10.5v2h2" fill="none" stroke="#bbb" stroke-width="0.9"/></svg>
<div class="t" style="left:419.00px;top:329.00px;font-size:10px;color:#a6a6a6;transform:scaleX(0.8996);transform-origin:0 0;">Bring to F<u>r</u>ont</div>
<div class="a" style="left:539px;top:326.6px;width:1px;height:11px;background:#e1e1e1;"></div>
<svg class="a" style="left:545px;top:327.6px;" width="6" height="10" viewBox="0 0 6 10"><path d="M1 0.8L5 4.8 1 8.8" fill="none" stroke="#aaa" stroke-width="1"/></svg>
<svg class="a" style="left:400px;top:346px;" width="14" height="14" viewBox="0 0 14 14"><rect x="0.5" y="0.5" width="5" height="5" fill="none" stroke="#bbb" stroke-width="0.9"/><rect x="7.5" y="7.5" width="5" height="5" fill="none" stroke="#bbb" stroke-width="0.9"/><path d="M3 7v3h2M8 2h2v3" fill="none" stroke="#bbb" stroke-width="0.9"/></svg>
<div class="t" style="left:419.00px;top:350.00px;font-size:10px;color:#a6a6a6;transform:scaleX(0.8406);transform-origin:0 0;">Send to Bac<u>k</u></div>
<div class="a" style="left:539px;top:347.7px;width:1px;height:11px;background:#e1e1e1;"></div>
<svg class="a" style="left:545px;top:348.7px;" width="6" height="10" viewBox="0 0 6 10"><path d="M1 0.8L5 4.8 1 8.8" fill="none" stroke="#aaa" stroke-width="1"/></svg>
<div class="a" style="left:415px;top:365.5px;width:141px;height:1px;background:#e1e1e1;"></div>
<svg class="a" style="left:400px;top:371px;" width="14" height="10" viewBox="0 0 14 10"><rect x="0.5" y="1" width="8" height="5" rx="2.5" fill="none" stroke="#444" stroke-width="1"/><rect x="5" y="3.5" width="8" height="5" rx="2.5" fill="none" stroke="#444" stroke-width="1"/></svg>
<div class="t" style="left:419.00px;top:373.00px;font-size:10px;color:#262626;transform:scaleX(0.8994);transform-origin:0 0;">L<u>i</u>nk</div>
<div class="a" style="left:539px;top:370.9px;width:1px;height:11px;background:#e1e1e1;"></div>
<svg class="a" style="left:545px;top:371.9px;" width="6" height="10" viewBox="0 0 6 10"><path d="M1 0.8L5 4.8 1 8.8" fill="none" stroke="#555" stroke-width="1"/></svg>
<div class="a" style="left:415px;top:388.5px;width:141px;height:1px;background:#e1e1e1;"></div>
<div class="t" style="left:419.00px;top:397.00px;font-size:10px;color:#262626;transform:scaleX(0.8294);transform-origin:0 0;"><u>S</u>ave as Picture...</div>
<div class="a" style="left:415px;top:412px;width:141px;height:1px;background:#e1e1e1;"></div>
<div class="t" style="left:419.00px;top:420.00px;font-size:10px;color:#262626;transform:scaleX(0.8707);transform-origin:0 0;">Assig<u>n</u> Macro...</div>
<div class="a" style="left:415px;top:435px;width:141px;height:1px;background:#e1e1e1;"></div>
<svg class="a" style="left:400px;top:439px;" width="14" height="14" viewBox="0 0 14 14"><rect x="0.5" y="0.5" width="12" height="10" fill="none" stroke="#555" stroke-width="0.9"/><path d="M1 9l3.5-4 3 3" fill="none" stroke="#555" stroke-width="0.9"/><rect x="7" y="8" width="6.5" height="5" fill="#fff" stroke="#2b7cd3" stroke-width="0.9"/></svg>
<div class="t" style="left:419.00px;top:443.00px;font-size:10px;color:#262626;transform:scaleX(0.8969);transform-origin:0 0;">View <u>A</u>lt Text...</div>
<svg class="a" style="left:400px;top:459px;" width="14" height="14" viewBox="0 0 14 14"><path d="M5 1.5L2 3.5 5 5.5" fill="none" stroke="#2b7cd3" stroke-width="1"/><path d="M2.5 3.5h3v6" fill="none" stroke="#2b7cd3" stroke-width="1"/><path d="M1 8.5l3 2 2-3" fill="#3fae5a"/><rect x="7.5" y="7.5" width="6" height="6" fill="#fff" stroke="#555" stroke-width="0.9"/><path d="M9 10h3M9 12h3" stroke="#555" stroke-width="0.7"/></svg>
<div class="t" style="left:419.00px;top:464.00px;font-size:10px;color:#262626;transform:scaleX(0.8370);transform-origin:0 0;"><u>R</u>eset Graphic</div>
<svg class="a" style="left:400px;top:480px;" width="14" height="14" viewBox="0 0 14 14"><path d="M7 1.5h4l-2 2.5z" fill="#3fae5a"/><rect x="8.5" y="4.5" width="4" height="4" fill="none" stroke="#555" stroke-width="0.9"/><circle cx="10.5" cy="11" r="2" fill="none" stroke="#555" stroke-width="0.9"/><path d="M5 3.5C2 3.5 1 6 1 8s1.5 4 4 4M3 10.5l2 1.5-2 1.5" fill="none" stroke="#2b7cd3" stroke-width="1"/></svg>
<div class="t" style="left:419.00px;top:485.00px;font-size:10px;color:#262626;transform:scaleX(0.8693);transform-origin:0 0;">Con<u>v</u>ert to Shapes</div>
<svg class="a" style="left:400px;top:501px;" width="14" height="14" viewBox="0 0 14 14"><path d="M3 0.5v12M1.2 2.5L3 0.5l1.8 2M1.2 10.5L3 12.5l1.8-2" fill="none" stroke="#2b7cd3" stroke-width="0.9"/><path d="M7 0.5v13M12.5 0.5v13M7 0.5h1.5M7 13.5h1.5M11 0.5h1.5M11 13.5h1.5" fill="none" stroke="#444" stroke-width="0.9"/></svg>
<div class="t" style="left:419.00px;top:506.00px;font-size:10px;color:#262626;transform:scaleX(0.8472);transform-origin:0 0;">Si<u>z</u>e and Properties...</div>
<svg class="a" style="left:400px;top:522px;" width="14" height="14" viewBox="0 0 14 14"><path d="M5.5 0.5l6 5-3 3-6-5z" fill="#fff" stroke="#444" stroke-width="0.9"/><path d="M10 5l3 5" stroke="#444" stroke-width="0.9"/><path d="M3 8.5l5 3.5-2.5 1.5-4.5-3z" fill="#2b7cd3"/></svg>
<div class="t" style="left:419.00px;top:527.00px;font-size:10px;color:#262626;transform:scaleX(0.8858);transform-origin:0 0;">F<u>o</u>rmat Object...</div>
<div class="a" style="left:421px;top:124px;width:92px;height:17.5px;background:#fff;border:1px solid #c8c8c8;box-shadow:1px 1px 2px rgba(0,0,0,0.15);"></div>
<div class="t" style="left:424.50px;top:128.00px;font-size:9.4px;color:#444;transform:scaleX(0.9224);transform-origin:0 0;">SmartArt Quick Styles</div>
<div class="a" style="left:0px;top:546px;width:1024px;height:30px;background:#1c1c1c;"></div>
<svg class="a" style="left:12px;top:554.5px;" width="13" height="13" viewBox="0 0 13 13"><path d="M0 1.7L4.9 1V6H0zM5.6 0.9L12 0V6H5.6zM0 6.7H4.9V11.7L0 11zM5.6 6.7H12V12.5L5.6 11.8z" fill="#fff"/></svg>
<div class="a" style="left:36px;top:546.5px;width:216px;height:28.5px;background:#2f2f2f;border:1px solid #444;border-bottom:none;"></div>
<svg class="a" style="left:44px;top:554px;" width="14" height="14" viewBox="0 0 14 14"><circle cx="8.5" cy="5.5" r="4.2" fill="none" stroke="#ddd" stroke-width="1.1"/><path d="M5.5 8.5L1 13" stroke="#ddd" stroke-width="1.2"/></svg>
<div class="t" style="left:66.60px;top:557.00px;font-size:11px;color:#cdcdcd;transform:scaleX(0.9771);transform-origin:0 0;-webkit-text-stroke:0;">Type here to search</div>
<svg class="a" style="left:190px;top:546px;" width="62" height="30" viewBox="0 0 62 30"><defs><linearGradient id="wg" x1="0" y1="0" x2="1" y2="0.3"><stop offset="0" stop-color="#d0d8e8"/><stop offset="0.45" stop-color="#48c8f8"/><stop offset="1" stop-color="#2a80e0"/></linearGradient><linearGradient id="rg" x1="0" y1="0" x2="0" y2="1"><stop offset="0" stop-color="#8a88a8"/><stop offset="1" stop-color="#5a5a78"/></linearGradient></defs><path d="M12 24C16 20 22 17 28 15L34 12L36 9L37 4L39 3L40 8L46 8L52 10L57 13L59 17L59 22Z" fill="#b0602a"/><path d="M30 14L46 9L52 11L44 16L34 17Z" fill="#d88848"/><rect x="55" y="9" width="4" height="10" fill="#c87038"/><ellipse cx="33" cy="20" rx="3.5" ry="2.2" fill="#7aa838"/><ellipse cx="51" cy="16.5" rx="4.5" ry="3" fill="#7aa838"/><circle cx="20" cy="21" r="1.3" fill="#ffc020"/><path d="M14 27L36 21L62 17L62 30L38 30Z" fill="url(#rg)"/><path d="M4 30C6 25 12 22.5 20 23C28 23.5 38 26 46 30Z" fill="url(#wg)"/></svg>
<div class="a" style="left:327.5px;top:546px;width:36.5px;height:30px;background:#3b3b3b;"></div>
<div class="a" style="left:257.5px;top:574px;width:29.5px;height:2px;background:#76b9ed;"></div>
<div class="a" style="left:294.2px;top:574px;width:29.5px;height:2px;background:#76b9ed;"></div>
<div class="a" style="left:330.9px;top:574px;width:29.5px;height:2px;background:#76b9ed;"></div>
<div class="a" style="left:367.6px;top:574px;width:29.5px;height:2px;background:#76b9ed;"></div>
<div class="a" style="left:404.3px;top:574px;width:29.5px;height:2px;background:#76b9ed;"></div>
<div class="a" style="left:441.0px;top:574px;width:29.5px;height:2px;background:#76b9ed;"></div>
<div class="a" style="left:477.7px;top:574px;width:29.5px;height:2px;background:#76b9ed;"></div>
<div class="a" style="left:514.4px;top:574px;width:29.5px;height:2px;background:#76b9ed;"></div>
<div class="a" style="left:551.1px;top:574px;width:29.5px;height:2px;background:#76b9ed;"></div>
<svg class="a" style="left:263px;top:552px;" width="18" height="18" viewBox="0 0 18 18"><circle cx="9" cy="9" r="9" fill="#db4437"/><path d="M9 9L1.2 4.5A9 9 0 0 0 9 18z" fill="#0f9d58"/><path d="M9 9l7.8-4.5A9 9 0 0 1 9 18z" fill="#f4b400"/><path d="M9 9L16.8 4.5H9z" fill="#db4437"/><circle cx="9" cy="9" r="4.2" fill="#fff"/><circle cx="9" cy="9" r="3.3" fill="#4285f4"/></svg>
<svg class="a" style="left:300px;top:554px;" width="17" height="14" viewBox="0 0 17 14"><path d="M0 1h6l2 2h9v11H0z" fill="#e8a818"/><path d="M0 4h17v10H0z" fill="#f8d775"/><path d="M6 9h5v5H6z" fill="#2b7cd3"/><path d="M7.5 10.5h2v3.5h-2z" fill="#f8d775"/></svg>
<svg class="a" style="left:337px;top:552px;" width="19" height="18" viewBox="0 0 19 18"><rect x="5" y="0" width="14" height="18" rx="1.5" fill="#21a366"/><rect x="12" y="0" width="7" height="9" fill="#33c481"/><rect x="5" y="9" width="14" height="9" fill="#107c41"/><rect x="0" y="4" width="10" height="10" rx="1" fill="#185c37"/><path d="M2.5 6.5l5 5M7.5 6.5l-5 5" stroke="#fff" stroke-width="1.3"/></svg>
<svg class="a" style="left:373px;top:552px;" width="19" height="18" viewBox="0 0 19 18"><ellipse cx="9" cy="7" rx="8.5" ry="5.5" fill="#d9534f"/><ellipse cx="9" cy="6.5" rx="6.5" ry="3.8" fill="#f4f4f4"/><path d="M9 6l-2 8M9 6l3 7" stroke="#666" stroke-width="0.9"/><circle cx="8" cy="15" r="1.8" fill="none" stroke="#2b9be0" stroke-width="1.2"/><circle cx="13" cy="14.5" r="1.8" fill="none" stroke="#2b9be0" stroke-width="1.2"/></svg>
<svg class="a" style="left:410px;top:552px;" width="18" height="18" viewBox="0 0 18 18"><circle cx="9" cy="9" r="9" fill="#0c59a4"/><path d="M1 8C1 3 5 0 9.5 0 14 0 18 3.5 18 8c0 3-2.5 4.5-5 4.5-2.5 0-4-1-4-2.5 0-1 1-1.5 1-2.5C10 5.5 8 4 5.5 4.5 3 5 1.5 7 1 8z" fill="#35c1f1"/><path d="M18 10c-1 4.5-5 8-9.5 8C6 18 3 16.5 2 14c2 1.5 5 2 7.5 1.5 3-0.5 6.5-2.5 8.5-5.5z" fill="#52d17c" opacity="0.85"/></svg>
<svg class="a" style="left:446px;top:552px;" width="18" height="18" viewBox="0 0 18 18"><circle cx="9" cy="9" r="9" fill="#fff"/><rect x="7.6" y="3" width="2.2" height="6" rx="1.1" fill="#36c5f0"/><rect x="9" y="7.6" width="6" height="2.2" rx="1.1" fill="#2eb67d"/><rect x="8.2" y="9" width="2.2" height="6" rx="1.1" fill="#ecb22e"/><rect x="3" y="8.2" width="6" height="2.2" rx="1.1" fill="#e01e5a"/></svg>
<svg class="a" style="left:483px;top:552px;" width="18" height="18" viewBox="0 0 18 18"><circle cx="9" cy="9" r="9" fill="#14a800"/><text x="3.5" y="12" font-size="8" font-weight="bold" fill="#fff" font-family="Liberation Sans">up</text></svg>
<svg class="a" style="left:518px;top:551px;" width="20" height="19" viewBox="0 0 20 19"><path d="M9 3C4 3 1 6.5 1 10s3 6 7 6c2 0 2-2 1.5-3s0.5-2 2-2h3c2 0 3-1.5 3-3C17.5 5 14 3 9 3z" fill="#e8eef8" stroke="#7a9cc6" stroke-width="0.8"/><circle cx="5" cy="9" r="1.3" fill="#e81123"/><circle cx="8" cy="6" r="1.3" fill="#ffb900"/><circle cx="12" cy="6" r="1.3" fill="#107c10"/><circle cx="5.5" cy="12.5" r="1.3" fill="#0078d4"/><path d="M18 1l-7 12" stroke="#c07020" stroke-width="1.8"/><path d="M11 13l-1.5 3 2.5-1.5" fill="#444"/></svg>
<svg class="a" style="left:556px;top:552px;" width="19" height="18" viewBox="0 0 19 18"><circle cx="10" cy="9" r="9" fill="#ff8f6b"/><path d="M10 0a9 9 0 0 1 9 9h-9z" fill="#ed6c47"/><path d="M10 9h9a9 9 0 0 1-9 9z" fill="#d35230"/><rect x="0" y="4" width="10" height="10" rx="1" fill="#c43e1c"/><text x="2.3" y="12.2" font-size="8" font-weight="bold" fill="#fff" font-family="Liberation Sans">P</text></svg>
<svg class="a" style="left:851px;top:557px;" width="10" height="7" viewBox="0 0 10 7"><path d="M0.8 6L5 1.2 9.2 6" fill="none" stroke="#fff" stroke-width="1.1"/></svg>
<svg class="a" style="left:866px;top:555px;" width="14" height="10" viewBox="0 0 14 10"><path d="M3 9.5h9c1.5 0 2-1 2-2s-1-2-2-2c0-2-1.5-3.5-3.5-3.5-1.5 0-2.5 1-3 2C3.5 4 2 5 2 6.5c-1 0-2 1-2 1.5 0 1 1 1.5 3 1.5z" fill="#eee"/></svg>
<svg class="a" style="left:884px;top:554px;" width="14" height="13" viewBox="0 0 14 13"><path d="M3 1v2.5M5 1v2.5M2 3.5h4v2H2zM4 5.5v3" stroke="#eee" stroke-width="0.9" fill="none"/><rect x="5.5" y="5.5" width="8" height="6" fill="none" stroke="#eee" stroke-width="1"/><rect x="6.5" y="6.5" width="6" height="4" fill="#eee"/></svg>
<svg class="a" style="left:904px;top:554px;" width="12" height="12" viewBox="0 0 12 12"><path d="M1 11.5a10.5 10.5 0 0 1 10.5-10.5M3.5 11.5a8 8 0 0 1 8-8M6 11.5a5.5 5.5 0 0 1 5.5-5.5M8.5 11.5a3 3 0 0 1 3-3" fill="none" stroke="#ccc" stroke-width="0.9"/><circle cx="10.5" cy="10.5" r="1.5" fill="#fff"/></svg>
<svg class="a" style="left:920px;top:555px;" width="14" height="11" viewBox="0 0 14 11"><path d="M0.5 3.5h2.5l3.5-3v10l-3.5-3H0.5z" fill="none" stroke="#eee" stroke-width="0.9"/><path d="M9 3.5l4 4M13 3.5l-4 4" stroke="#eee" stroke-width="0.9"/></svg>
<div class="t" style="left:949.30px;top:550.00px;font-size:9.6px;color:#fff;transform:scaleX(0.8741);transform-origin:0 0;">07:45</div>
<div class="t" style="left:940.80px;top:564.00px;font-size:9.6px;color:#fff;transform:scaleX(0.9132);transform-origin:0 0;">24/5/2023</div>
<svg class="a" style="left:992px;top:550px;" width="22" height="24" viewBox="0 0 22 24"><path d="M1 1.5h14v10H8l-3 3v-3H1z" fill="#fff"/><path d="M3.5 4.5h9M3.5 7h9M3.5 9.5h6" stroke="#1c1c1c" stroke-width="0.9"/><circle cx="14" cy="16" r="6.5" fill="#1c1c1c" stroke="#ddd" stroke-width="1"/><text x="9.8" y="19.2" font-size="8.5" fill="#fff" font-family="Liberation Sans">18</text></svg>
<div class="a" style="left:1020px;top:546px;width:1px;height:30px;background:#555;"></div>
</body></html>
